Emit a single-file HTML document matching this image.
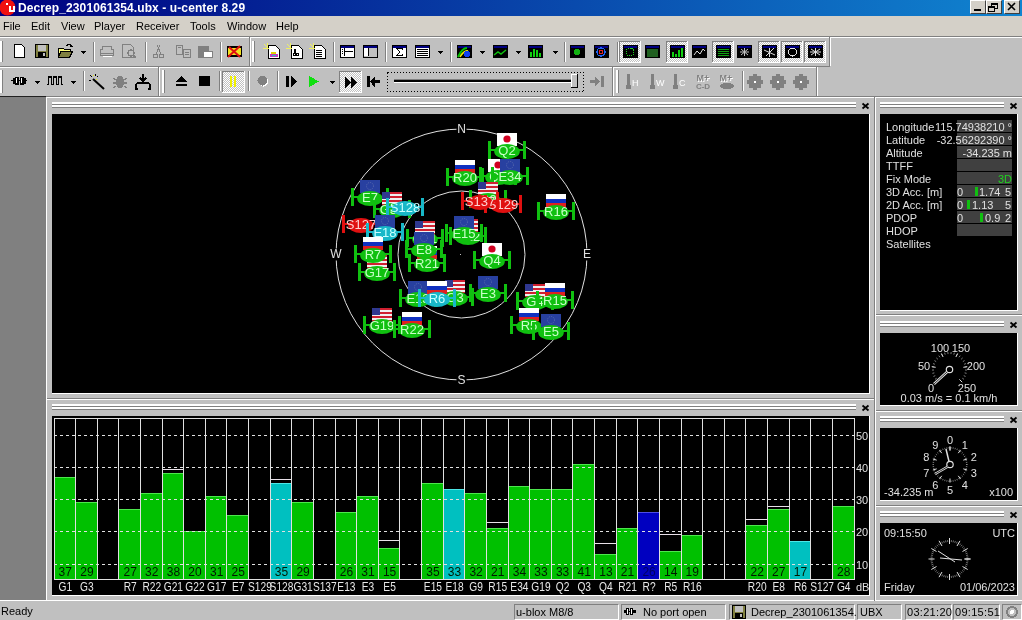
<!DOCTYPE html><html><head><meta charset="utf-8"><style>
html,body{margin:0;padding:0;width:1022px;height:620px;overflow:hidden;background:#c0c0c0;position:relative;font-family:"Liberation Sans",sans-serif}
body>div,body>svg{position:absolute}
.t{white-space:nowrap}
body{will-change:transform}
</style></head><body>
<div style="left:0;top:0;width:1022px;height:16px;background:linear-gradient(to right,#000080,#1084d0)"></div>
<svg style="left:0;top:0" width="17" height="16" shape-rendering="crispEdges"><circle cx="7.5" cy="7.5" r="8" fill="#f01010" shape-rendering="auto"/><rect x="6" y="3" width="2" height="2" fill="#fff"/><rect x="9" y="6" width="2" height="6" fill="#fff"/><rect x="13" y="6" width="2" height="6" fill="#fff"/><rect x="9" y="10" width="6" height="2" fill="#fff"/></svg>
<div class="t" style="left:18px;top:1px;color:#fff;font-weight:bold;font-size:12px;line-height:14px;letter-spacing:0.1px">Decrep_2301061354.ubx - u-center 8.29</div>
<div style="left:970px;top:0px;width:16px;height:14px;background:#d4d0c8;border-top:1px solid #fff;border-left:1px solid #fff;border-right:1px solid #404040;border-bottom:1px solid #404040;box-sizing:border-box"></div>
<div style="left:986px;top:0px;width:16px;height:14px;background:#d4d0c8;border-top:1px solid #fff;border-left:1px solid #fff;border-right:1px solid #404040;border-bottom:1px solid #404040;box-sizing:border-box"></div>
<div style="left:1004px;top:0px;width:16px;height:14px;background:#d4d0c8;border-top:1px solid #fff;border-left:1px solid #fff;border-right:1px solid #404040;border-bottom:1px solid #404040;box-sizing:border-box"></div>
<svg style="left:970px;top:0" width="52" height="14" shape-rendering="crispEdges"><rect x="4" y="9" width="7" height="2" fill="#000"/><path d="M21.5 3.5h6v5h-6z" fill="none" stroke="#000"/><rect x="21" y="3" width="7" height="2" fill="#000"/><path d="M18.5 6.5h6v5h-6z" fill="#d4d0c8" stroke="#000"/><rect x="18" y="6" width="7" height="2" fill="#000"/><path d="M38 3L45 10M45 3L38 10" stroke="#000" stroke-width="1.6" shape-rendering="auto"/></svg>
<div style="left:0px;top:16px;width:1022px;height:20px;background:#d4d0c8;"></div>
<div class="t" style="left:3px;top:20px;color:#000;font-size:11px;line-height:13px">File</div>
<div class="t" style="left:31px;top:20px;color:#000;font-size:11px;line-height:13px">Edit</div>
<div class="t" style="left:61px;top:20px;color:#000;font-size:11px;line-height:13px">View</div>
<div class="t" style="left:94px;top:20px;color:#000;font-size:11px;line-height:13px">Player</div>
<div class="t" style="left:136px;top:20px;color:#000;font-size:11px;line-height:13px">Receiver</div>
<div class="t" style="left:190px;top:20px;color:#000;font-size:11px;line-height:13px">Tools</div>
<div class="t" style="left:227px;top:20px;color:#000;font-size:11px;line-height:13px">Window</div>
<div class="t" style="left:276px;top:20px;color:#000;font-size:11px;line-height:13px">Help</div>
<div style="left:0px;top:36px;width:1022px;height:1px;background:#808080;"></div>
<div style="left:0px;top:37px;width:1022px;height:1px;background:#ffffff;"></div>
<div style="left:0px;top:38px;width:1022px;height:58px;background:#c0c0c0;"></div>
<div style="left:0px;top:66px;width:830px;height:1px;background:#808080;"></div>
<div style="left:0px;top:67px;width:817px;height:1px;background:#ffffff;"></div>
<div style="left:0px;top:96px;width:1022px;height:1px;background:#808080;"></div>
<div style="left:249px;top:37px;width:1px;height:29px;background:#808080;"></div>
<div style="left:250px;top:37px;width:1px;height:29px;background:#ffffff;"></div>
<div style="left:829px;top:37px;width:1px;height:29px;background:#808080;"></div>
<div style="left:830px;top:37px;width:1px;height:29px;background:#ffffff;"></div>
<div style="left:158px;top:67px;width:1px;height:29px;background:#808080;"></div>
<div style="left:159px;top:67px;width:1px;height:29px;background:#ffffff;"></div>
<div style="left:612px;top:67px;width:1px;height:29px;background:#808080;"></div>
<div style="left:613px;top:67px;width:1px;height:29px;background:#ffffff;"></div>
<div style="left:816px;top:67px;width:1px;height:29px;background:#808080;"></div>
<div style="left:817px;top:67px;width:1px;height:29px;background:#ffffff;"></div>
<div style="left:0px;top:41px;width:2px;height:21px;background:#ffffff;"></div>
<div style="left:2px;top:41px;width:1px;height:21px;background:#808080;"></div>
<div style="left:252px;top:41px;width:2px;height:21px;background:#ffffff;"></div>
<div style="left:254px;top:41px;width:1px;height:21px;background:#808080;"></div>
<div style="left:0px;top:70px;width:2px;height:23px;background:#ffffff;"></div>
<div style="left:2px;top:70px;width:1px;height:23px;background:#808080;"></div>
<div style="left:162px;top:70px;width:2px;height:23px;background:#ffffff;"></div>
<div style="left:164px;top:70px;width:1px;height:23px;background:#808080;"></div>
<div style="left:616px;top:70px;width:2px;height:23px;background:#ffffff;"></div>
<div style="left:618px;top:70px;width:1px;height:23px;background:#808080;"></div>
<div style="left:93px;top:42px;width:1px;height:20px;background:#808080;"></div>
<div style="left:94px;top:42px;width:1px;height:20px;background:#ffffff;"></div>
<div style="left:145px;top:42px;width:1px;height:20px;background:#808080;"></div>
<div style="left:146px;top:42px;width:1px;height:20px;background:#ffffff;"></div>
<div style="left:220px;top:42px;width:1px;height:20px;background:#808080;"></div>
<div style="left:221px;top:42px;width:1px;height:20px;background:#ffffff;"></div>
<div style="left:333px;top:42px;width:1px;height:20px;background:#808080;"></div>
<div style="left:334px;top:42px;width:1px;height:20px;background:#ffffff;"></div>
<div style="left:385px;top:42px;width:1px;height:20px;background:#808080;"></div>
<div style="left:386px;top:42px;width:1px;height:20px;background:#ffffff;"></div>
<div style="left:450px;top:42px;width:1px;height:20px;background:#808080;"></div>
<div style="left:451px;top:42px;width:1px;height:20px;background:#ffffff;"></div>
<div style="left:564px;top:42px;width:1px;height:20px;background:#808080;"></div>
<div style="left:565px;top:42px;width:1px;height:20px;background:#ffffff;"></div>
<div style="left:617px;top:42px;width:1px;height:20px;background:#808080;"></div>
<div style="left:618px;top:42px;width:1px;height:20px;background:#ffffff;"></div>
<div style="left:83px;top:71px;width:1px;height:20px;background:#808080;"></div>
<div style="left:84px;top:71px;width:1px;height:20px;background:#ffffff;"></div>
<div style="left:219px;top:71px;width:1px;height:20px;background:#808080;"></div>
<div style="left:220px;top:71px;width:1px;height:20px;background:#ffffff;"></div>
<div style="left:248px;top:71px;width:1px;height:20px;background:#808080;"></div>
<div style="left:249px;top:71px;width:1px;height:20px;background:#ffffff;"></div>
<div style="left:277px;top:71px;width:1px;height:20px;background:#808080;"></div>
<div style="left:278px;top:71px;width:1px;height:20px;background:#ffffff;"></div>
<div style="left:742px;top:71px;width:1px;height:20px;background:#808080;"></div>
<div style="left:743px;top:71px;width:1px;height:20px;background:#ffffff;"></div>
<svg style="left:0;top:0" width="1022" height="97" shape-rendering="crispEdges">
<defs><pattern id="dith" width="2" height="2" patternUnits="userSpaceOnUse"><rect width="2" height="2" fill="#c0c0c0"/><rect width="1" height="1" fill="#fff"/><rect x="1" y="1" width="1" height="1" fill="#fff"/></pattern></defs>
<path d="M14.5 44.5h7l3 3v9.5h-10z" fill="#fff" stroke="#000" stroke-width="1" />
<rect x="35" y="44" width="14" height="14" fill="#000"/>
<rect x="36" y="45" width="12" height="12" fill="#808040"/>
<rect x="38" y="45" width="8" height="6" fill="#c0c0c0"/>
<rect x="38" y="52" width="8" height="5" fill="#000"/>
<rect x="43" y="53" width="2" height="3" fill="#c0c0c0"/>
<path d="M58.5 48.5h5l1 1h6v2h-10l-2 6z" fill="#ffff80" stroke="#000" stroke-width="1" />
<path d="M58.5 56.5l3-5h11l-3 6h-11z" fill="#808040" stroke="#000" stroke-width="1" />
<path d="M66 46q3-3 6 0" fill="none" stroke="#000" stroke-width="1.2" />
<path d="M71 45l2 2h-3z" fill="#000" stroke="none" stroke-width="1" />
<path d="M81 51h5l-2.5 3z" fill="#000" stroke="none" stroke-width="1" />
<path d="M102.5 46.5h9v3h2v6h-13v-6h2z" fill="none" stroke="#808080" stroke-width="1" />
<rect x="101" y="53" width="12" height="1" fill="#808080"/>
<rect x="103" y="56" width="9" height="1" fill="#fff"/>
<path d="M122.5 44.5h8l3 3v10h-11z" fill="none" stroke="#808080" stroke-width="1" />
<circle cx="131" cy="53" r="3" fill="none" stroke="#808080" stroke-width="1.2"/>
<path d="M133 55l3 3" fill="none" stroke="#808080" stroke-width="1.5" />
<circle cx="155.5" cy="56" r="2" fill="none" stroke="#808080"/>
<circle cx="161.5" cy="56" r="2" fill="none" stroke="#808080"/>
<path d="M156 54l4-9M161 54l-4-9" fill="none" stroke="#808080" stroke-width="1" />
<path d="M176.5 45.5h6v9h-6zM183.5 49.5h7v8h-7z" fill="#c0c0c0" stroke="#808080" stroke-width="1" />
<rect x="178" y="47" width="3" height="1" fill="#808080"/>
<rect x="185" y="52" width="4" height="1" fill="#808080"/>
<rect x="185" y="54" width="4" height="1" fill="#808080"/>
<rect x="198" y="46" width="11" height="12" fill="#808080"/>
<rect x="203" y="51" width="10" height="7" fill="#fff"/>
<path d="M203.5 51.5h9v6h-9z" fill="none" stroke="#808080" stroke-width="1" />
<rect x="227" y="46" width="15" height="11" fill="#000"/>
<rect x="228" y="48" width="13" height="7" fill="#f0e020"/>
<path d="M228 57l12-11M229 47l11 10" fill="none" stroke="#e01010" stroke-width="2" shape-rendering="auto"/>
<path d="M268.5 45.5h7l4 4v8.5h-11z" fill="#fff" stroke="#000" stroke-width="1" />
<path d="M264 44l5 5M263 48h5M267 43v5" fill="none" stroke="#f0f060" stroke-width="1" />
<path d="M291.5 45.5h7l4 4v8.5h-11z" fill="#fff" stroke="#000" stroke-width="1" />
<path d="M287 44l5 5M286 48h5M290 43v5" fill="none" stroke="#f0f060" stroke-width="1" />
<path d="M314.5 45.5h7l4 4v8.5h-11z" fill="#fff" stroke="#000" stroke-width="1" />
<path d="M310 44l5 5M309 48h5M313 43v5" fill="none" stroke="#f0f060" stroke-width="1" />
<rect x="271" y="52" width="5" height="2" fill="#e0d000"/>
<rect x="270" y="54" width="8" height="3" fill="#c040c0"/>
<rect x="272" y="55" width="4" height="1" fill="#20c0c0"/>
<rect x="294" y="49" width="2" height="4" fill="#000"/>
<rect x="293" y="53" width="6" height="3" fill="#000"/>
<rect x="294" y="54" width="1" height="1" fill="#fff"/>
<rect x="297" y="54" width="1" height="1" fill="#fff"/>
<rect x="316" y="50" width="6" height="1" fill="#000"/>
<rect x="316" y="52" width="6" height="1" fill="#000"/>
<rect x="316" y="54" width="6" height="1" fill="#000"/>
<rect x="316" y="56" width="6" height="1" fill="#000"/>
<rect x="340" y="45" width="15" height="13" fill="#000"/>
<rect x="341" y="46" width="13" height="2" fill="#000080"/>
<rect x="341" y="48" width="13" height="9" fill="#fff"/>
<rect x="344" y="48" width="1" height="8" fill="#000"/>
<rect x="345" y="51" width="8" height="1" fill="#000"/>
<rect x="342" y="49" width="1" height="1" fill="#000"/>
<rect x="342" y="51" width="1" height="1" fill="#000"/>
<rect x="342" y="53" width="1" height="1" fill="#000"/>
<rect x="363" y="45" width="15" height="13" fill="#000"/>
<rect x="364" y="46" width="13" height="2" fill="#000080"/>
<rect x="364" y="48" width="13" height="9" fill="#c0c0c0"/>
<rect x="364" y="48" width="4" height="8" fill="#fff"/>
<rect x="368" y="48" width="1" height="8" fill="#000"/>
<rect x="392" y="45" width="15" height="13" fill="#000"/>
<rect x="393" y="46" width="13" height="2" fill="#000080"/>
<rect x="393" y="48" width="13" height="9" fill="#fff"/>
<path d="M396 48h7v2h-1l-1-1h-3l2 3l-2 3h3l1-1h1v2h-7l3-4z" fill="#000" stroke="none" stroke-width="1" />
<rect x="415" y="45" width="15" height="13" fill="#000"/>
<rect x="416" y="46" width="13" height="2" fill="#000080"/>
<rect x="416" y="48" width="13" height="9" fill="#fff"/>
<rect x="417" y="49" width="11" height="1" fill="#000"/>
<rect x="417" y="51" width="11" height="1" fill="#000"/>
<rect x="417" y="53" width="11" height="1" fill="#000"/>
<rect x="417" y="55" width="11" height="1" fill="#000"/>
<path d="M438 51h5l-2.5 3z" fill="#000" stroke="none" stroke-width="1" />
<rect x="457" y="45" width="15" height="13" fill="#000"/>
<rect x="458" y="46" width="13" height="2" fill="#000080"/>
<rect x="458" y="48" width="13" height="9" fill="#000"/>
<path d="M458 57q4-9 9-9" fill="none" stroke="#00c000" stroke-width="2" shape-rendering="auto"/>
<path d="M460 57q4-7 8-6" fill="none" stroke="#f0f000" stroke-width="1.5" shape-rendering="auto"/>
<circle cx="467" cy="54" r="3" fill="#1040f0"/>
<path d="M480 51h5l-2.5 3z" fill="#000" stroke="none" stroke-width="1" />
<rect x="493" y="45" width="15" height="13" fill="#000"/>
<rect x="494" y="46" width="13" height="2" fill="#000080"/>
<rect x="494" y="48" width="13" height="9" fill="#000"/>
<path d="M494 55l4-3l3 2l5-4" fill="none" stroke="#10c010" stroke-width="1.5" shape-rendering="auto"/>
<path d="M516 51h5l-2.5 3z" fill="#000" stroke="none" stroke-width="1" />
<rect x="528" y="45" width="15" height="13" fill="#000"/>
<rect x="529" y="46" width="13" height="2" fill="#000080"/>
<rect x="529" y="48" width="13" height="9" fill="#000"/>
<rect x="530" y="52" width="2" height="5" fill="#10d010"/>
<rect x="533" y="49" width="2" height="8" fill="#10d010"/>
<rect x="536" y="50" width="2" height="7" fill="#10d010"/>
<rect x="539" y="53" width="2" height="4" fill="#10d010"/>
<path d="M553 51h5l-2.5 3z" fill="#000" stroke="none" stroke-width="1" />
<rect x="570" y="45" width="15" height="13" fill="#000"/>
<rect x="571" y="46" width="13" height="2" fill="#000080"/>
<rect x="571" y="48" width="13" height="9" fill="#000"/>
<circle cx="577" cy="52" r="3" fill="#10b010"/>
<rect x="594" y="45" width="15" height="13" fill="#000"/>
<rect x="595" y="46" width="13" height="2" fill="#000080"/>
<rect x="595" y="48" width="13" height="9" fill="#000"/>
<circle cx="601" cy="52" r="4" fill="none" stroke="#2060f0" stroke-width="1.3"/><circle cx="601" cy="52" r="2" fill="none" stroke="#e02020"/>
<rect x="619" y="41" width="22" height="22" fill="url(#dith)"/>
<rect x="619" y="41" width="22" height="1" fill="#808080"/>
<rect x="619" y="41" width="1" height="22" fill="#808080"/>
<rect x="619" y="62" width="22" height="1" fill="#fff"/>
<rect x="640" y="41" width="1" height="22" fill="#fff"/>
<rect x="666" y="41" width="22" height="22" fill="url(#dith)"/>
<rect x="666" y="41" width="22" height="1" fill="#808080"/>
<rect x="666" y="41" width="1" height="22" fill="#808080"/>
<rect x="666" y="62" width="22" height="1" fill="#fff"/>
<rect x="687" y="41" width="1" height="22" fill="#fff"/>
<rect x="712" y="41" width="22" height="22" fill="url(#dith)"/>
<rect x="712" y="41" width="22" height="1" fill="#808080"/>
<rect x="712" y="41" width="1" height="22" fill="#808080"/>
<rect x="712" y="62" width="22" height="1" fill="#fff"/>
<rect x="733" y="41" width="1" height="22" fill="#fff"/>
<rect x="758" y="41" width="22" height="22" fill="url(#dith)"/>
<rect x="758" y="41" width="22" height="1" fill="#808080"/>
<rect x="758" y="41" width="1" height="22" fill="#808080"/>
<rect x="758" y="62" width="22" height="1" fill="#fff"/>
<rect x="779" y="41" width="1" height="22" fill="#fff"/>
<rect x="781" y="41" width="22" height="22" fill="url(#dith)"/>
<rect x="781" y="41" width="22" height="1" fill="#808080"/>
<rect x="781" y="41" width="1" height="22" fill="#808080"/>
<rect x="781" y="62" width="22" height="1" fill="#fff"/>
<rect x="802" y="41" width="1" height="22" fill="#fff"/>
<rect x="804" y="41" width="22" height="22" fill="url(#dith)"/>
<rect x="804" y="41" width="22" height="1" fill="#808080"/>
<rect x="804" y="41" width="1" height="22" fill="#808080"/>
<rect x="804" y="62" width="22" height="1" fill="#fff"/>
<rect x="825" y="41" width="1" height="22" fill="#fff"/>
<rect x="623" y="45" width="15" height="13" fill="#000"/>
<rect x="624" y="46" width="13" height="2" fill="#000080"/>
<rect x="624" y="48" width="13" height="9" fill="#000"/>
<circle cx="630" cy="52" r="4" fill="none" stroke="#20d020" stroke-width="1" stroke-dasharray="1 1"/>
<rect x="645" y="45" width="15" height="13" fill="#000"/>
<rect x="646" y="46" width="13" height="2" fill="#000080"/>
<rect x="646" y="48" width="13" height="9" fill="#000"/>
<rect x="647" y="49" width="11" height="8" fill="#206020"/>
<rect x="670" y="45" width="15" height="13" fill="#000"/>
<rect x="671" y="46" width="13" height="2" fill="#000080"/>
<rect x="671" y="48" width="13" height="9" fill="#000"/>
<rect x="672" y="52" width="2" height="5" fill="#10d010"/>
<rect x="675" y="54" width="2" height="3" fill="#10d010"/>
<rect x="678" y="50" width="2" height="7" fill="#10d010"/>
<rect x="681" y="48" width="2" height="9" fill="#10d010"/>
<rect x="692" y="45" width="15" height="13" fill="#000"/>
<rect x="693" y="46" width="13" height="2" fill="#000080"/>
<rect x="693" y="48" width="13" height="9" fill="#000"/>
<path d="M694 55l3-4l3 3l3-5l2 2" fill="none" stroke="#e0e0e0" stroke-width="1" shape-rendering="auto"/>
<rect x="716" y="45" width="15" height="13" fill="#000"/>
<rect x="717" y="46" width="13" height="2" fill="#000080"/>
<rect x="717" y="48" width="13" height="9" fill="#000"/>
<rect x="718" y="49" width="11" height="1" fill="#10a010"/>
<rect x="718" y="51" width="11" height="1" fill="#10a010"/>
<rect x="718" y="53" width="11" height="1" fill="#10a010"/>
<rect x="718" y="55" width="11" height="1" fill="#10a010"/>
<rect x="737" y="45" width="15" height="13" fill="#000"/>
<rect x="738" y="46" width="13" height="2" fill="#000080"/>
<rect x="738" y="48" width="13" height="9" fill="#000"/>
<path d="M740 52h9M744.5 48v8M741 49l7 6M748 49l-7 6" fill="none" stroke="#c0c0c0" stroke-width="1" shape-rendering="auto"/>
<rect x="762" y="45" width="15" height="13" fill="#000"/>
<rect x="763" y="46" width="13" height="2" fill="#000080"/>
<rect x="763" y="48" width="13" height="9" fill="#000"/>
<path d="M764 50l11 5M769.5 48v9M766 56l8-8" fill="none" stroke="#e0e0e0" stroke-width="1" shape-rendering="auto"/>
<rect x="785" y="45" width="15" height="13" fill="#000"/>
<rect x="786" y="46" width="13" height="2" fill="#000080"/>
<rect x="786" y="48" width="13" height="9" fill="#000"/>
<circle cx="792.5" cy="52" r="4" fill="none" stroke="#e0e0e0" stroke-width="1"/>
<rect x="808" y="45" width="15" height="13" fill="#000"/>
<rect x="809" y="46" width="13" height="2" fill="#000080"/>
<rect x="809" y="48" width="13" height="9" fill="#000"/>
<path d="M810 52h11M815.5 48v8M811 49l9 6M820 49l-9 6" fill="none" stroke="#e0e0e0" stroke-width="1" shape-rendering="auto"/>
<path d="M11 80h2M13 78h2v5h-2zM15 77h3v7h-3zM20 77h3v7h-3zM23 78h2v5h-2zM25 80h2" fill="#000" stroke="#000" stroke-width="1" />
<rect x="11" y="80" width="16" height="1" fill="#000"/>
<rect x="16" y="78" width="1" height="5" fill="#fff"/>
<rect x="21" y="78" width="1" height="5" fill="#fff"/>
<path d="M35 81h5l-2.5 3z" fill="#000" stroke="none" stroke-width="1" />
<path d="M47 84.5h1.5v-7.5h3v7.5h2v-7.5h3v7.5h2v-7.5h3v7.5h1" fill="none" stroke="#000" stroke-width="1.3" />
<path d="M71 81h5l-2.5 3z" fill="#000" stroke="none" stroke-width="1" />
<path d="M93 79l11 10" fill="none" stroke="#000" stroke-width="2" shape-rendering="auto"/>
<path d="M90 75l2 2M95 74v2M89 80h2M97 77l1-1" fill="none" stroke="#000" stroke-width="1" />
<rect x="93" y="75" width="1" height="1" fill="#f0f000"/>
<rect x="96" y="79" width="1" height="1" fill="#f0f000"/>
<ellipse cx="120" cy="82" rx="4" ry="6" fill="#808080"/>
<path d="M113 78l3 2M127 78l-3 2M113 83h3M124 83h3M113 88l3-2M127 88l-3-2" fill="none" stroke="#808080" stroke-width="1.2" />
<path d="M143 74v6M140 78l3 3l3-3" fill="none" stroke="#000" stroke-width="1.5" />
<path d="M136 89v-3q0-3 3-3h8q3 0 3 3v3" fill="none" stroke="#000" stroke-width="1.6" />
<rect x="135" y="88" width="3" height="2" fill="#000"/>
<rect x="148" y="88" width="3" height="2" fill="#000"/>
<path d="M181.5 76l5.5 6h-11z" fill="#000" stroke="none" stroke-width="1" />
<rect x="176" y="84" width="11" height="2" fill="#000"/>
<rect x="199" y="76" width="11" height="10" fill="#000"/>
<rect x="222" y="71" width="23" height="22" fill="url(#dith)"/>
<rect x="222" y="71" width="23" height="1" fill="#808080"/>
<rect x="222" y="71" width="1" height="22" fill="#808080"/>
<rect x="222" y="92" width="23" height="1" fill="#fff"/>
<rect x="244" y="71" width="1" height="22" fill="#fff"/>
<rect x="230" y="76" width="2" height="11" fill="#f0f000"/>
<rect x="234" y="76" width="2" height="11" fill="#f0f000"/>
<circle cx="263.5" cy="81.5" r="5" fill="#fff"/><circle cx="262.5" cy="80.5" r="5" fill="#808080"/>
<rect x="286" y="76" width="3" height="11" fill="#000"/>
<path d="M291 76l6 5.5l-6 5.5z" fill="#000" stroke="none" stroke-width="1" />
<path d="M309 76l10 5.5l-10 5.5z" fill="#10e010" stroke="none" stroke-width="1" />
<path d="M330 81h5l-2.5 3z" fill="#000" stroke="none" stroke-width="1" />
<rect x="339" y="71" width="23" height="22" fill="url(#dith)"/>
<rect x="339" y="71" width="23" height="1" fill="#808080"/>
<rect x="339" y="71" width="1" height="22" fill="#808080"/>
<rect x="339" y="92" width="23" height="1" fill="#fff"/>
<rect x="361" y="71" width="1" height="22" fill="#fff"/>
<path d="M345 77l6 5.5l-6 5.5zM351 77l6 5.5l-6 5.5z" fill="#000" stroke="none" stroke-width="1" />
<rect x="367" y="76" width="3" height="11" fill="#000"/>
<path d="M370 81.5l5-5v11z" fill="#000" stroke="none" stroke-width="1" />
<rect x="373" y="80" width="7" height="3" fill="#000"/>
<rect x="387.5" y="72.5" width="196" height="19" fill="none" stroke="#000" stroke-width="1" stroke-dasharray="1 2"/>
<rect x="394" y="80" width="177" height="2" fill="#000"/>
<rect x="394" y="82" width="177" height="1" fill="#fff"/>
<rect x="394" y="79" width="177" height="1" fill="#808080"/>
<rect x="571" y="74" width="7" height="14" fill="#c0c0c0"/>
<rect x="571" y="74" width="7" height="1" fill="#fff"/>
<rect x="571" y="74" width="1" height="14" fill="#fff"/>
<rect x="577" y="74" width="1" height="14" fill="#000"/>
<rect x="571" y="87" width="7" height="1" fill="#000"/>
<path d="M590 80h7v3h-7zM595 76l5 5.5l-5 5.5z" fill="#808080" stroke="none" stroke-width="1" />
<rect x="601" y="76" width="3" height="11" fill="#808080"/>
<rect x="627" y="74" width="3" height="12" fill="#808080"/>
<circle cx="628.5" cy="87" r="2.5" fill="#808080"/>
<text x="632" y="86" font-size="9" fill="#fff" font-family="Liberation Sans" shape-rendering="auto">H</text>
<rect x="651" y="74" width="3" height="12" fill="#808080"/>
<circle cx="652.5" cy="87" r="2.5" fill="#808080"/>
<text x="656" y="86" font-size="9" fill="#fff" font-family="Liberation Sans" shape-rendering="auto">W</text>
<rect x="674" y="74" width="3" height="12" fill="#808080"/>
<circle cx="675.5" cy="87" r="2.5" fill="#808080"/>
<text x="679" y="86" font-size="9" fill="#fff" font-family="Liberation Sans" shape-rendering="auto">C</text>
<text x="704" y="82" font-size="9" font-weight="bold" fill="#fff" text-anchor="middle" font-family="Liberation Sans">M+</text>
<text x="703" y="81" font-size="9" font-weight="bold" fill="#808080" text-anchor="middle" font-family="Liberation Sans">M+</text>
<text x="727" y="82" font-size="9" font-weight="bold" fill="#fff" text-anchor="middle" font-family="Liberation Sans">M+</text>
<text x="726" y="81" font-size="9" font-weight="bold" fill="#808080" text-anchor="middle" font-family="Liberation Sans">M+</text>
<text x="703" y="89" font-size="8" font-weight="bold" fill="#808080" text-anchor="middle" font-family="Liberation Sans">C-D</text>
<ellipse cx="727" cy="86" rx="7" ry="3" fill="#808080"/>
<circle cx="755" cy="82" r="5" fill="#808080"/>
<rect x="759.0" y="80.0" width="4" height="4" fill="#808080"/>
<rect x="757.2" y="84.2" width="4" height="4" fill="#808080"/>
<rect x="753.0" y="86.0" width="4" height="4" fill="#808080"/>
<rect x="748.8" y="84.2" width="4" height="4" fill="#808080"/>
<rect x="747.0" y="80.0" width="4" height="4" fill="#808080"/>
<rect x="748.8" y="75.8" width="4" height="4" fill="#808080"/>
<rect x="753.0" y="74.0" width="4" height="4" fill="#808080"/>
<rect x="757.2" y="75.8" width="4" height="4" fill="#808080"/>
<circle cx="755" cy="82" r="1.5" fill="#fff"/>
<circle cx="778" cy="82" r="5" fill="#808080"/>
<rect x="782.0" y="80.0" width="4" height="4" fill="#808080"/>
<rect x="780.2" y="84.2" width="4" height="4" fill="#808080"/>
<rect x="776.0" y="86.0" width="4" height="4" fill="#808080"/>
<rect x="771.8" y="84.2" width="4" height="4" fill="#808080"/>
<rect x="770.0" y="80.0" width="4" height="4" fill="#808080"/>
<rect x="771.8" y="75.8" width="4" height="4" fill="#808080"/>
<rect x="776.0" y="74.0" width="4" height="4" fill="#808080"/>
<rect x="780.2" y="75.8" width="4" height="4" fill="#808080"/>
<circle cx="778" cy="82" r="1.5" fill="#fff"/>
<circle cx="801" cy="82" r="5" fill="#808080"/>
<rect x="805.0" y="80.0" width="4" height="4" fill="#808080"/>
<rect x="803.2" y="84.2" width="4" height="4" fill="#808080"/>
<rect x="799.0" y="86.0" width="4" height="4" fill="#808080"/>
<rect x="794.8" y="84.2" width="4" height="4" fill="#808080"/>
<rect x="793.0" y="80.0" width="4" height="4" fill="#808080"/>
<rect x="794.8" y="75.8" width="4" height="4" fill="#808080"/>
<rect x="799.0" y="74.0" width="4" height="4" fill="#808080"/>
<rect x="803.2" y="75.8" width="4" height="4" fill="#808080"/>
<circle cx="801" cy="82" r="1.5" fill="#fff"/>
</svg>
<div style="left:0px;top:97px;width:46px;height:504px;background:#808080;"></div>
<div style="left:0px;top:96px;width:46px;height:1px;background:#202020;"></div>
<div style="left:46px;top:97px;width:1px;height:504px;background:#ffffff;"></div>
<div style="left:47px;top:97px;width:975px;height:504px;background:#c0c0c0;"></div>
<div style="left:47px;top:97px;width:975px;height:1px;background:#ffffff;"></div>
<div style="left:0px;top:600px;width:1022px;height:1px;background:#ffffff;"></div>
<div style="left:52px;top:102px;width:804px;height:2px;background:#fff"></div>
<div style="left:52px;top:104px;width:804px;height:1px;background:#808080"></div>
<div style="left:52px;top:105px;width:804px;height:2px;background:#fff"></div>
<div style="left:52px;top:107px;width:804px;height:1px;background:#808080"></div>
<svg style="left:861px;top:102px" width="9" height="8"><path d="M1.5 1.5L7.5 6.5M7.5 1.5L1.5 6.5" stroke="#000" stroke-width="1.8"/></svg>
<div style="left:52px;top:114px;width:817px;height:279px;background:#000;"></div>
<div style="left:52px;top:393px;width:818px;height:1px;background:#ffffff;"></div>
<div style="left:869px;top:114px;width:1px;height:280px;background:#ffffff;"></div>
<div style="left:47px;top:398px;width:827px;height:1px;background:#808080;"></div>
<div style="left:47px;top:399px;width:827px;height:1px;background:#ffffff;"></div>
<div style="left:52px;top:404px;width:804px;height:2px;background:#fff"></div>
<div style="left:52px;top:406px;width:804px;height:1px;background:#808080"></div>
<div style="left:52px;top:407px;width:804px;height:2px;background:#fff"></div>
<div style="left:52px;top:409px;width:804px;height:1px;background:#808080"></div>
<svg style="left:861px;top:404px" width="9" height="8"><path d="M1.5 1.5L7.5 6.5M7.5 1.5L1.5 6.5" stroke="#000" stroke-width="1.8"/></svg>
<div style="left:52px;top:416px;width:817px;height:179px;background:#000;"></div>
<div style="left:52px;top:595px;width:818px;height:1px;background:#ffffff;"></div>
<div style="left:869px;top:416px;width:1px;height:180px;background:#ffffff;"></div>
<div style="left:874px;top:97px;width:1px;height:504px;background:#808080;"></div>
<div style="left:875px;top:97px;width:1px;height:504px;background:#ffffff;"></div>
<div style="left:880px;top:102px;width:124px;height:2px;background:#fff"></div>
<div style="left:880px;top:104px;width:124px;height:1px;background:#808080"></div>
<div style="left:880px;top:105px;width:124px;height:2px;background:#fff"></div>
<div style="left:880px;top:107px;width:124px;height:1px;background:#808080"></div>
<svg style="left:1009px;top:102px" width="9" height="8"><path d="M1.5 1.5L7.5 6.5M7.5 1.5L1.5 6.5" stroke="#000" stroke-width="1.8"/></svg>
<div style="left:880px;top:114px;width:137px;height:196px;background:#000;"></div>
<div style="left:880px;top:310px;width:138px;height:1px;background:#ffffff;"></div>
<div style="left:1017px;top:114px;width:1px;height:197px;background:#ffffff;"></div>
<div style="left:880px;top:321px;width:124px;height:2px;background:#fff"></div>
<div style="left:880px;top:323px;width:124px;height:1px;background:#808080"></div>
<div style="left:880px;top:324px;width:124px;height:2px;background:#fff"></div>
<div style="left:880px;top:326px;width:124px;height:1px;background:#808080"></div>
<svg style="left:1009px;top:321px" width="9" height="8"><path d="M1.5 1.5L7.5 6.5M7.5 1.5L1.5 6.5" stroke="#000" stroke-width="1.8"/></svg>
<div style="left:880px;top:333px;width:137px;height:72px;background:#000;"></div>
<div style="left:880px;top:405px;width:138px;height:1px;background:#ffffff;"></div>
<div style="left:1017px;top:333px;width:1px;height:73px;background:#ffffff;"></div>
<div style="left:880px;top:416px;width:124px;height:2px;background:#fff"></div>
<div style="left:880px;top:418px;width:124px;height:1px;background:#808080"></div>
<div style="left:880px;top:419px;width:124px;height:2px;background:#fff"></div>
<div style="left:880px;top:421px;width:124px;height:1px;background:#808080"></div>
<svg style="left:1009px;top:416px" width="9" height="8"><path d="M1.5 1.5L7.5 6.5M7.5 1.5L1.5 6.5" stroke="#000" stroke-width="1.8"/></svg>
<div style="left:880px;top:428px;width:137px;height:72px;background:#000;"></div>
<div style="left:880px;top:500px;width:138px;height:1px;background:#ffffff;"></div>
<div style="left:1017px;top:428px;width:1px;height:73px;background:#ffffff;"></div>
<div style="left:880px;top:511px;width:124px;height:2px;background:#fff"></div>
<div style="left:880px;top:513px;width:124px;height:1px;background:#808080"></div>
<div style="left:880px;top:514px;width:124px;height:2px;background:#fff"></div>
<div style="left:880px;top:516px;width:124px;height:1px;background:#808080"></div>
<svg style="left:1009px;top:511px" width="9" height="8"><path d="M1.5 1.5L7.5 6.5M7.5 1.5L1.5 6.5" stroke="#000" stroke-width="1.8"/></svg>
<div style="left:880px;top:523px;width:137px;height:72px;background:#000;"></div>
<div style="left:880px;top:595px;width:138px;height:1px;background:#ffffff;"></div>
<div style="left:1017px;top:523px;width:1px;height:73px;background:#ffffff;"></div>
<div style="left:876px;top:314px;width:146px;height:1px;background:#808080;"></div>
<div style="left:876px;top:315px;width:146px;height:1px;background:#ffffff;"></div>
<div style="left:876px;top:410px;width:146px;height:1px;background:#808080;"></div>
<div style="left:876px;top:411px;width:146px;height:1px;background:#ffffff;"></div>
<div style="left:876px;top:505px;width:146px;height:1px;background:#808080;"></div>
<div style="left:876px;top:506px;width:146px;height:1px;background:#ffffff;"></div>
<div style="left:0px;top:601px;width:1022px;height:19px;background:#c0c0c0;"></div>
<div class="t" style="left:1px;top:605px;color:#000;font-size:11px;line-height:13px">Ready</div>
<div style="left:514px;top:604px;width:105px;height:16px;box-sizing:border-box;border-top:1px solid #808080;border-left:1px solid #808080;border-right:1px solid #fff;border-bottom:1px solid #fff"></div>
<div style="left:621px;top:604px;width:105px;height:16px;box-sizing:border-box;border-top:1px solid #808080;border-left:1px solid #808080;border-right:1px solid #fff;border-bottom:1px solid #fff"></div>
<div style="left:729px;top:604px;width:126px;height:16px;box-sizing:border-box;border-top:1px solid #808080;border-left:1px solid #808080;border-right:1px solid #fff;border-bottom:1px solid #fff"></div>
<div style="left:857px;top:604px;width:45px;height:16px;box-sizing:border-box;border-top:1px solid #808080;border-left:1px solid #808080;border-right:1px solid #fff;border-bottom:1px solid #fff"></div>
<div style="left:905px;top:604px;width:47px;height:16px;box-sizing:border-box;border-top:1px solid #808080;border-left:1px solid #808080;border-right:1px solid #fff;border-bottom:1px solid #fff"></div>
<div style="left:953px;top:604px;width:47px;height:16px;box-sizing:border-box;border-top:1px solid #808080;border-left:1px solid #808080;border-right:1px solid #fff;border-bottom:1px solid #fff"></div>
<div style="left:1002px;top:604px;width:20px;height:16px;box-sizing:border-box;border-top:1px solid #808080;border-left:1px solid #808080;border-right:1px solid #fff;border-bottom:1px solid #fff"></div>
<div class="t" style="left:516px;top:606px;color:#000;font-size:11px;line-height:13px">u-blox M8/8</div>
<div class="t" style="left:643px;top:606px;color:#000;font-size:11px;line-height:13px">No port open</div>
<div class="t" style="left:751px;top:606px;color:#000;font-size:11px;line-height:13px">Decrep_2301061354.</div>
<div class="t" style="left:860px;top:606px;color:#000;font-size:11px;line-height:13px">UBX</div>
<div class="t" style="left:907px;top:606px;color:#000;font-size:11px;line-height:13px;letter-spacing:0.3px">03:21:20</div>
<div class="t" style="left:955px;top:606px;color:#000;font-size:11px;line-height:13px;letter-spacing:0.3px">09:15:51</div>
<svg style="left:0;top:0" width="1022" height="620">
<defs><clipPath id="skyclip"><rect x="52" y="114" width="817" height="279"/></clipPath></defs>
<g clip-path="url(#skyclip)">
<circle cx="461.5" cy="254.5" r="125.5" fill="none" stroke="#e0e0e0" stroke-width="1"/>
<circle cx="461.5" cy="254.5" r="63.5" fill="none" stroke="#e0e0e0" stroke-width="1"/>
<rect x="460" y="254" width="1" height="1" fill="#c0c0c0"/>
<rect x="456.5" y="123.0" width="10" height="12" fill="#000"/>
<text x="461.5" y="132.8" font-size="12" fill="#e0e0e0" text-anchor="middle" font-family="Liberation Sans">N</text>
<rect x="456.5" y="374.0" width="10" height="12" fill="#000"/>
<text x="461.5" y="383.8" font-size="12" fill="#e0e0e0" text-anchor="middle" font-family="Liberation Sans">S</text>
<rect x="331.0" y="248.5" width="10" height="12" fill="#000"/>
<text x="336.0" y="258.3" font-size="12" fill="#e0e0e0" text-anchor="middle" font-family="Liberation Sans">W</text>
<rect x="582.0" y="248.5" width="10" height="12" fill="#000"/>
<text x="587.0" y="258.3" font-size="12" fill="#e0e0e0" text-anchor="middle" font-family="Liberation Sans">E</text>
<rect x="497" y="133" width="20" height="13" fill="#fff"/><circle cx="507" cy="139" r="3.6" fill="#d00020"/><ellipse cx="507" cy="151.5" rx="12.8" ry="7.5" fill="#10c010"/><rect x="488" y="141" width="3" height="18" fill="#10c010"/><rect x="523" y="141" width="3" height="18" fill="#10c010"/><rect x="490" y="149" width="34" height="2" fill="#10c010"/><text x="507" y="155" font-size="13" fill="#c8ffc8" text-anchor="middle" font-family="Liberation Sans">Q2</text>
<rect x="455" y="160" width="20" height="5" fill="#fff"/><rect x="455" y="165" width="20" height="4" fill="#1030c0"/><rect x="455" y="169" width="20" height="4" fill="#e02020"/><ellipse cx="465" cy="178.5" rx="12.8" ry="7.5" fill="#10c010"/><rect x="446" y="168" width="3" height="18" fill="#10c010"/><rect x="481" y="168" width="3" height="18" fill="#10c010"/><rect x="448" y="176" width="34" height="2" fill="#10c010"/><text x="465" y="182" font-size="13" fill="#c8ffc8" text-anchor="middle" font-family="Liberation Sans">R20</text>
<rect x="488" y="159" width="20" height="13" fill="#fff"/><circle cx="498" cy="165" r="3.6" fill="#d00020"/><ellipse cx="498" cy="177.5" rx="12.8" ry="7.5" fill="#10c010"/><rect x="479" y="167" width="3" height="18" fill="#10c010"/><rect x="514" y="167" width="3" height="18" fill="#10c010"/><rect x="481" y="175" width="34" height="2" fill="#10c010"/><text x="498" y="181" font-size="13" fill="#c8ffc8" text-anchor="middle" font-family="Liberation Sans">Q3</text>
<rect x="500" y="159" width="20" height="13" fill="#2840a0"/><circle cx="510" cy="165" r="3.5" fill="none" stroke="#6070b0" stroke-width="0.8" stroke-dasharray="1 1"/><ellipse cx="510" cy="177.5" rx="12.8" ry="7.5" fill="#10c010"/><rect x="491" y="167" width="3" height="18" fill="#10c010"/><rect x="526" y="167" width="3" height="18" fill="#10c010"/><rect x="493" y="175" width="34" height="2" fill="#10c010"/><text x="510" y="181" font-size="13" fill="#c8ffc8" text-anchor="middle" font-family="Liberation Sans">E34</text>
<rect x="478" y="182" width="20" height="2" fill="#d02030"/><rect x="478" y="184" width="20" height="2" fill="#f0f0f0"/><rect x="478" y="186" width="20" height="2" fill="#d02030"/><rect x="478" y="188" width="20" height="2" fill="#f0f0f0"/><rect x="478" y="190" width="20" height="2" fill="#d02030"/><rect x="478" y="192" width="20" height="2" fill="#f0f0f0"/><rect x="478" y="194" width="20" height="1" fill="#d02030"/><rect x="478" y="182" width="8" height="7" fill="#303890"/><ellipse cx="488" cy="200.5" rx="12.8" ry="7.5" fill="#10c010"/><rect x="469" y="190" width="3" height="18" fill="#10c010"/><rect x="504" y="190" width="3" height="18" fill="#10c010"/><rect x="471" y="198" width="34" height="2" fill="#10c010"/><text x="488" y="204" font-size="13" fill="#c8ffc8" text-anchor="middle" font-family="Liberation Sans">G9</text>
<ellipse cx="503" cy="205.5" rx="12.8" ry="7.5" fill="#e01010"/><rect x="484" y="195" width="3" height="18" fill="#e01010"/><rect x="519" y="195" width="3" height="18" fill="#e01010"/><rect x="486" y="203" width="34" height="2" fill="#e01010"/><text x="503" y="209" font-size="13" fill="#ffd0d0" text-anchor="middle" font-family="Liberation Sans">S129</text>
<ellipse cx="480" cy="202.5" rx="12.8" ry="7.5" fill="#e01010"/><rect x="461" y="192" width="3" height="18" fill="#e01010"/><rect x="496" y="192" width="3" height="18" fill="#e01010"/><rect x="463" y="200" width="34" height="2" fill="#e01010"/><text x="480" y="206" font-size="13" fill="#ffd0d0" text-anchor="middle" font-family="Liberation Sans">S137</text>
<rect x="546" y="194" width="20" height="5" fill="#fff"/><rect x="546" y="199" width="20" height="4" fill="#1030c0"/><rect x="546" y="203" width="20" height="4" fill="#e02020"/><ellipse cx="556" cy="212.5" rx="12.8" ry="7.5" fill="#10c010"/><rect x="537" y="202" width="3" height="18" fill="#10c010"/><rect x="572" y="202" width="3" height="18" fill="#10c010"/><rect x="539" y="210" width="34" height="2" fill="#10c010"/><text x="556" y="216" font-size="13" fill="#c8ffc8" text-anchor="middle" font-family="Liberation Sans">R16</text>
<rect x="360" y="180" width="20" height="13" fill="#2840a0"/><circle cx="370" cy="186" r="3.5" fill="none" stroke="#6070b0" stroke-width="0.8" stroke-dasharray="1 1"/><ellipse cx="370" cy="198.5" rx="12.8" ry="7.5" fill="#10c010"/><rect x="351" y="188" width="3" height="18" fill="#10c010"/><rect x="386" y="188" width="3" height="18" fill="#10c010"/><rect x="353" y="196" width="34" height="2" fill="#10c010"/><text x="370" y="202" font-size="13" fill="#c8ffc8" text-anchor="middle" font-family="Liberation Sans">E7</text>
<rect x="382" y="192" width="20" height="2" fill="#d02030"/><rect x="382" y="194" width="20" height="2" fill="#f0f0f0"/><rect x="382" y="196" width="20" height="2" fill="#d02030"/><rect x="382" y="198" width="20" height="2" fill="#f0f0f0"/><rect x="382" y="200" width="20" height="2" fill="#d02030"/><rect x="382" y="202" width="20" height="2" fill="#f0f0f0"/><rect x="382" y="204" width="20" height="1" fill="#d02030"/><rect x="382" y="192" width="8" height="7" fill="#303890"/><ellipse cx="392" cy="210.5" rx="12.8" ry="7.5" fill="#10c010"/><rect x="373" y="200" width="3" height="18" fill="#10c010"/><rect x="408" y="200" width="3" height="18" fill="#10c010"/><rect x="375" y="208" width="34" height="2" fill="#10c010"/><text x="392" y="214" font-size="13" fill="#c8ffc8" text-anchor="middle" font-family="Liberation Sans">G31</text>
<ellipse cx="405" cy="208.5" rx="12.8" ry="7.5" fill="#18b8c8"/><rect x="386" y="198" width="3" height="18" fill="#18b8c8"/><rect x="421" y="198" width="3" height="18" fill="#18b8c8"/><rect x="388" y="206" width="34" height="2" fill="#18b8c8"/><text x="405" y="212" font-size="13" fill="#c8ffff" text-anchor="middle" font-family="Liberation Sans">S128</text>
<ellipse cx="361" cy="225.5" rx="12.8" ry="7.5" fill="#e01010"/><rect x="342" y="215" width="3" height="18" fill="#e01010"/><rect x="377" y="215" width="3" height="18" fill="#e01010"/><rect x="344" y="223" width="34" height="2" fill="#e01010"/><text x="361" y="229" font-size="13" fill="#ffd0d0" text-anchor="middle" font-family="Liberation Sans">S127</text>
<rect x="375" y="215" width="20" height="13" fill="#2840a0"/><circle cx="385" cy="221" r="3.5" fill="none" stroke="#6070b0" stroke-width="0.8" stroke-dasharray="1 1"/><ellipse cx="385" cy="233.5" rx="12.8" ry="7.5" fill="#18b8c8"/><rect x="366" y="223" width="3" height="18" fill="#18b8c8"/><rect x="401" y="223" width="3" height="18" fill="#18b8c8"/><rect x="368" y="231" width="34" height="2" fill="#18b8c8"/><text x="385" y="237" font-size="13" fill="#c8ffff" text-anchor="middle" font-family="Liberation Sans">E18</text>
<rect x="415" y="221" width="20" height="2" fill="#d02030"/><rect x="415" y="223" width="20" height="2" fill="#f0f0f0"/><rect x="415" y="225" width="20" height="2" fill="#d02030"/><rect x="415" y="227" width="20" height="2" fill="#f0f0f0"/><rect x="415" y="229" width="20" height="2" fill="#d02030"/><rect x="415" y="231" width="20" height="2" fill="#f0f0f0"/><rect x="415" y="233" width="20" height="1" fill="#d02030"/><rect x="415" y="221" width="8" height="7" fill="#303890"/><ellipse cx="425" cy="239.5" rx="12.8" ry="7.5" fill="#10c010"/><rect x="406" y="229" width="3" height="18" fill="#10c010"/><rect x="441" y="229" width="3" height="18" fill="#10c010"/><rect x="408" y="237" width="34" height="2" fill="#10c010"/><text x="425" y="243" font-size="13" fill="#c8ffc8" text-anchor="middle" font-family="Liberation Sans">G21</text>
<rect x="417" y="246" width="20" height="5" fill="#fff"/><rect x="417" y="251" width="20" height="4" fill="#1030c0"/><rect x="417" y="255" width="20" height="4" fill="#e02020"/><ellipse cx="427" cy="264.5" rx="12.8" ry="7.5" fill="#10c010"/><rect x="408" y="254" width="3" height="18" fill="#10c010"/><rect x="443" y="254" width="3" height="18" fill="#10c010"/><rect x="410" y="262" width="34" height="2" fill="#10c010"/><text x="427" y="268" font-size="13" fill="#c8ffc8" text-anchor="middle" font-family="Liberation Sans">R21</text>
<rect x="414" y="232" width="20" height="13" fill="#2840a0"/><circle cx="424" cy="238" r="3.5" fill="none" stroke="#6070b0" stroke-width="0.8" stroke-dasharray="1 1"/><ellipse cx="424" cy="250.5" rx="12.8" ry="7.5" fill="#10c010"/><rect x="405" y="240" width="3" height="18" fill="#10c010"/><rect x="440" y="240" width="3" height="18" fill="#10c010"/><rect x="407" y="248" width="34" height="2" fill="#10c010"/><text x="424" y="254" font-size="13" fill="#c8ffc8" text-anchor="middle" font-family="Liberation Sans">E8</text>
<rect x="458" y="219" width="20" height="2" fill="#d02030"/><rect x="458" y="221" width="20" height="2" fill="#f0f0f0"/><rect x="458" y="223" width="20" height="2" fill="#d02030"/><rect x="458" y="225" width="20" height="2" fill="#f0f0f0"/><rect x="458" y="227" width="20" height="2" fill="#d02030"/><rect x="458" y="229" width="20" height="2" fill="#f0f0f0"/><rect x="458" y="231" width="20" height="1" fill="#d02030"/><rect x="458" y="219" width="8" height="7" fill="#303890"/><ellipse cx="468" cy="237.5" rx="12.8" ry="7.5" fill="#10c010"/><rect x="449" y="227" width="3" height="18" fill="#10c010"/><rect x="484" y="227" width="3" height="18" fill="#10c010"/><rect x="451" y="235" width="34" height="2" fill="#10c010"/><text x="468" y="241" font-size="13" fill="#c8ffc8" text-anchor="middle" font-family="Liberation Sans">G22</text>
<rect x="454" y="216" width="20" height="13" fill="#2840a0"/><circle cx="464" cy="222" r="3.5" fill="none" stroke="#6070b0" stroke-width="0.8" stroke-dasharray="1 1"/><ellipse cx="464" cy="234.5" rx="12.8" ry="7.5" fill="#10c010"/><rect x="445" y="224" width="3" height="18" fill="#10c010"/><rect x="480" y="224" width="3" height="18" fill="#10c010"/><rect x="447" y="232" width="34" height="2" fill="#10c010"/><text x="464" y="238" font-size="13" fill="#c8ffc8" text-anchor="middle" font-family="Liberation Sans">E15</text>
<rect x="482" y="243" width="20" height="13" fill="#fff"/><circle cx="492" cy="249" r="3.6" fill="#d00020"/><ellipse cx="492" cy="261.5" rx="12.8" ry="7.5" fill="#10c010"/><rect x="473" y="251" width="3" height="18" fill="#10c010"/><rect x="508" y="251" width="3" height="18" fill="#10c010"/><rect x="475" y="259" width="34" height="2" fill="#10c010"/><text x="492" y="265" font-size="13" fill="#c8ffc8" text-anchor="middle" font-family="Liberation Sans">Q4</text>
<rect x="367" y="255" width="20" height="2" fill="#d02030"/><rect x="367" y="257" width="20" height="2" fill="#f0f0f0"/><rect x="367" y="259" width="20" height="2" fill="#d02030"/><rect x="367" y="261" width="20" height="2" fill="#f0f0f0"/><rect x="367" y="263" width="20" height="2" fill="#d02030"/><rect x="367" y="265" width="20" height="2" fill="#f0f0f0"/><rect x="367" y="267" width="20" height="1" fill="#d02030"/><rect x="367" y="255" width="8" height="7" fill="#303890"/><ellipse cx="377" cy="273.5" rx="12.8" ry="7.5" fill="#10c010"/><rect x="358" y="263" width="3" height="18" fill="#10c010"/><rect x="393" y="263" width="3" height="18" fill="#10c010"/><rect x="360" y="271" width="34" height="2" fill="#10c010"/><text x="377" y="277" font-size="13" fill="#c8ffc8" text-anchor="middle" font-family="Liberation Sans">G17</text>
<rect x="363" y="237" width="20" height="5" fill="#fff"/><rect x="363" y="242" width="20" height="4" fill="#1030c0"/><rect x="363" y="246" width="20" height="4" fill="#e02020"/><ellipse cx="373" cy="255.5" rx="12.8" ry="7.5" fill="#10c010"/><rect x="354" y="245" width="3" height="18" fill="#10c010"/><rect x="389" y="245" width="3" height="18" fill="#10c010"/><rect x="356" y="253" width="34" height="2" fill="#10c010"/><text x="373" y="259" font-size="13" fill="#c8ffc8" text-anchor="middle" font-family="Liberation Sans">R7</text>
<rect x="408" y="281" width="20" height="13" fill="#2840a0"/><circle cx="418" cy="287" r="3.5" fill="none" stroke="#6070b0" stroke-width="0.8" stroke-dasharray="1 1"/><ellipse cx="418" cy="299.5" rx="12.8" ry="7.5" fill="#10c010"/><rect x="399" y="289" width="3" height="18" fill="#10c010"/><rect x="434" y="289" width="3" height="18" fill="#10c010"/><rect x="401" y="297" width="34" height="2" fill="#10c010"/><text x="418" y="303" font-size="13" fill="#c8ffc8" text-anchor="middle" font-family="Liberation Sans">E13</text>
<rect x="445" y="280" width="20" height="2" fill="#d02030"/><rect x="445" y="282" width="20" height="2" fill="#f0f0f0"/><rect x="445" y="284" width="20" height="2" fill="#d02030"/><rect x="445" y="286" width="20" height="2" fill="#f0f0f0"/><rect x="445" y="288" width="20" height="2" fill="#d02030"/><rect x="445" y="290" width="20" height="2" fill="#f0f0f0"/><rect x="445" y="292" width="20" height="1" fill="#d02030"/><rect x="445" y="280" width="8" height="7" fill="#303890"/><ellipse cx="455" cy="298.5" rx="12.8" ry="7.5" fill="#10c010"/><rect x="436" y="288" width="3" height="18" fill="#10c010"/><rect x="471" y="288" width="3" height="18" fill="#10c010"/><rect x="438" y="296" width="34" height="2" fill="#10c010"/><text x="455" y="302" font-size="13" fill="#c8ffc8" text-anchor="middle" font-family="Liberation Sans">G3</text>
<rect x="427" y="281" width="20" height="5" fill="#fff"/><rect x="427" y="286" width="20" height="4" fill="#1030c0"/><rect x="427" y="290" width="20" height="4" fill="#e02020"/><ellipse cx="437" cy="299.5" rx="12.8" ry="7.5" fill="#18b8c8"/><rect x="418" y="289" width="3" height="18" fill="#18b8c8"/><rect x="453" y="289" width="3" height="18" fill="#18b8c8"/><rect x="420" y="297" width="34" height="2" fill="#18b8c8"/><text x="437" y="303" font-size="13" fill="#c8ffff" text-anchor="middle" font-family="Liberation Sans">R6</text>
<rect x="478" y="276" width="20" height="13" fill="#2840a0"/><circle cx="488" cy="282" r="3.5" fill="none" stroke="#6070b0" stroke-width="0.8" stroke-dasharray="1 1"/><ellipse cx="488" cy="294.5" rx="12.8" ry="7.5" fill="#10c010"/><rect x="469" y="284" width="3" height="18" fill="#10c010"/><rect x="504" y="284" width="3" height="18" fill="#10c010"/><rect x="471" y="292" width="34" height="2" fill="#10c010"/><text x="488" y="298" font-size="13" fill="#c8ffc8" text-anchor="middle" font-family="Liberation Sans">E3</text>
<rect x="372" y="308" width="20" height="2" fill="#d02030"/><rect x="372" y="310" width="20" height="2" fill="#f0f0f0"/><rect x="372" y="312" width="20" height="2" fill="#d02030"/><rect x="372" y="314" width="20" height="2" fill="#f0f0f0"/><rect x="372" y="316" width="20" height="2" fill="#d02030"/><rect x="372" y="318" width="20" height="2" fill="#f0f0f0"/><rect x="372" y="320" width="20" height="1" fill="#d02030"/><rect x="372" y="308" width="8" height="7" fill="#303890"/><ellipse cx="382" cy="326.5" rx="12.8" ry="7.5" fill="#10c010"/><rect x="363" y="316" width="3" height="18" fill="#10c010"/><rect x="398" y="316" width="3" height="18" fill="#10c010"/><rect x="365" y="324" width="34" height="2" fill="#10c010"/><text x="382" y="330" font-size="13" fill="#c8ffc8" text-anchor="middle" font-family="Liberation Sans">G19</text>
<rect x="402" y="312" width="20" height="5" fill="#fff"/><rect x="402" y="317" width="20" height="4" fill="#1030c0"/><rect x="402" y="321" width="20" height="4" fill="#e02020"/><ellipse cx="412" cy="330.5" rx="12.8" ry="7.5" fill="#10c010"/><rect x="393" y="320" width="3" height="18" fill="#10c010"/><rect x="428" y="320" width="3" height="18" fill="#10c010"/><rect x="395" y="328" width="34" height="2" fill="#10c010"/><text x="412" y="334" font-size="13" fill="#c8ffc8" text-anchor="middle" font-family="Liberation Sans">R22</text>
<rect x="525" y="284" width="20" height="2" fill="#d02030"/><rect x="525" y="286" width="20" height="2" fill="#f0f0f0"/><rect x="525" y="288" width="20" height="2" fill="#d02030"/><rect x="525" y="290" width="20" height="2" fill="#f0f0f0"/><rect x="525" y="292" width="20" height="2" fill="#d02030"/><rect x="525" y="294" width="20" height="2" fill="#f0f0f0"/><rect x="525" y="296" width="20" height="1" fill="#d02030"/><rect x="525" y="284" width="8" height="7" fill="#303890"/><ellipse cx="535" cy="302.5" rx="12.8" ry="7.5" fill="#10c010"/><rect x="516" y="292" width="3" height="18" fill="#10c010"/><rect x="551" y="292" width="3" height="18" fill="#10c010"/><rect x="518" y="300" width="34" height="2" fill="#10c010"/><text x="535" y="306" font-size="13" fill="#c8ffc8" text-anchor="middle" font-family="Liberation Sans">G4</text>
<rect x="545" y="283" width="20" height="5" fill="#fff"/><rect x="545" y="288" width="20" height="4" fill="#1030c0"/><rect x="545" y="292" width="20" height="4" fill="#e02020"/><ellipse cx="555" cy="301.5" rx="12.8" ry="7.5" fill="#10c010"/><rect x="536" y="291" width="3" height="18" fill="#10c010"/><rect x="571" y="291" width="3" height="18" fill="#10c010"/><rect x="538" y="299" width="34" height="2" fill="#10c010"/><text x="555" y="305" font-size="13" fill="#c8ffc8" text-anchor="middle" font-family="Liberation Sans">R15</text>
<rect x="519" y="308" width="20" height="5" fill="#fff"/><rect x="519" y="313" width="20" height="4" fill="#1030c0"/><rect x="519" y="317" width="20" height="4" fill="#e02020"/><ellipse cx="529" cy="326.5" rx="12.8" ry="7.5" fill="#10c010"/><rect x="510" y="316" width="3" height="18" fill="#10c010"/><rect x="545" y="316" width="3" height="18" fill="#10c010"/><rect x="512" y="324" width="34" height="2" fill="#10c010"/><text x="529" y="330" font-size="13" fill="#c8ffc8" text-anchor="middle" font-family="Liberation Sans">R5</text>
<rect x="541" y="314" width="20" height="13" fill="#2840a0"/><circle cx="551" cy="320" r="3.5" fill="none" stroke="#6070b0" stroke-width="0.8" stroke-dasharray="1 1"/><ellipse cx="551" cy="332.5" rx="12.8" ry="7.5" fill="#10c010"/><rect x="532" y="322" width="3" height="18" fill="#10c010"/><rect x="567" y="322" width="3" height="18" fill="#10c010"/><rect x="534" y="330" width="34" height="2" fill="#10c010"/><text x="551" y="336" font-size="13" fill="#c8ffc8" text-anchor="middle" font-family="Liberation Sans">E5</text>
</g>
<rect x="54" y="477" width="21" height="103" fill="#00c000"/>
<rect x="54" y="477" width="21" height="1" fill="#80ff80" opacity="0.6"/>
<rect x="75" y="502" width="22" height="78" fill="#00c000"/>
<rect x="75" y="502" width="22" height="1" fill="#80ff80" opacity="0.6"/>
<rect x="118" y="509" width="22" height="71" fill="#00c000"/>
<rect x="118" y="509" width="22" height="1" fill="#80ff80" opacity="0.6"/>
<rect x="140" y="493" width="22" height="87" fill="#00c000"/>
<rect x="140" y="493" width="22" height="1" fill="#80ff80" opacity="0.6"/>
<rect x="162" y="473" width="21" height="107" fill="#00c000"/>
<rect x="162" y="473" width="21" height="1" fill="#80ff80" opacity="0.6"/>
<rect x="162" y="469" width="21" height="1" fill="#e8e0e8"/>
<rect x="183" y="531" width="22" height="49" fill="#00c000"/>
<rect x="183" y="531" width="22" height="1" fill="#80ff80" opacity="0.6"/>
<rect x="205" y="496" width="21" height="84" fill="#00c000"/>
<rect x="205" y="496" width="21" height="1" fill="#80ff80" opacity="0.6"/>
<rect x="226" y="515" width="22" height="65" fill="#00c000"/>
<rect x="226" y="515" width="22" height="1" fill="#80ff80" opacity="0.6"/>
<rect x="270" y="483" width="21" height="97" fill="#00c0c0"/>
<rect x="270" y="483" width="21" height="1" fill="#80ffff" opacity="0.6"/>
<rect x="270" y="479" width="21" height="1" fill="#e8e0e8"/>
<rect x="291" y="502" width="22" height="78" fill="#00c000"/>
<rect x="291" y="502" width="22" height="1" fill="#80ff80" opacity="0.6"/>
<rect x="335" y="512" width="21" height="68" fill="#00c000"/>
<rect x="335" y="512" width="21" height="1" fill="#80ff80" opacity="0.6"/>
<rect x="356" y="496" width="22" height="84" fill="#00c000"/>
<rect x="356" y="496" width="22" height="1" fill="#80ff80" opacity="0.6"/>
<rect x="378" y="548" width="21" height="32" fill="#00c000"/>
<rect x="378" y="548" width="21" height="1" fill="#80ff80" opacity="0.6"/>
<rect x="378" y="540" width="21" height="1" fill="#e8e0e8"/>
<rect x="421" y="483" width="22" height="97" fill="#00c000"/>
<rect x="421" y="483" width="22" height="1" fill="#80ff80" opacity="0.6"/>
<rect x="443" y="489" width="21" height="91" fill="#00c0c0"/>
<rect x="443" y="489" width="21" height="1" fill="#80ffff" opacity="0.6"/>
<rect x="464" y="493" width="22" height="87" fill="#00c000"/>
<rect x="464" y="493" width="22" height="1" fill="#80ff80" opacity="0.6"/>
<rect x="486" y="528" width="22" height="52" fill="#00c000"/>
<rect x="486" y="528" width="22" height="1" fill="#80ff80" opacity="0.6"/>
<rect x="486" y="522" width="22" height="1" fill="#e8e0e8"/>
<rect x="508" y="486" width="21" height="94" fill="#00c000"/>
<rect x="508" y="486" width="21" height="1" fill="#80ff80" opacity="0.6"/>
<rect x="529" y="489" width="22" height="91" fill="#00c000"/>
<rect x="529" y="489" width="22" height="1" fill="#80ff80" opacity="0.6"/>
<rect x="551" y="489" width="21" height="91" fill="#00c000"/>
<rect x="551" y="489" width="21" height="1" fill="#80ff80" opacity="0.6"/>
<rect x="572" y="464" width="22" height="116" fill="#00c000"/>
<rect x="572" y="464" width="22" height="1" fill="#80ff80" opacity="0.6"/>
<rect x="594" y="554" width="22" height="26" fill="#00c000"/>
<rect x="594" y="554" width="22" height="1" fill="#80ff80" opacity="0.6"/>
<rect x="594" y="543" width="22" height="1" fill="#e8e0e8"/>
<rect x="616" y="528" width="21" height="52" fill="#00c000"/>
<rect x="616" y="528" width="21" height="1" fill="#80ff80" opacity="0.6"/>
<rect x="637" y="512" width="22" height="68" fill="#0000c0"/>
<rect x="637" y="512" width="22" height="1" fill="#8080ff" opacity="0.6"/>
<rect x="659" y="551" width="22" height="29" fill="#00c000"/>
<rect x="659" y="551" width="22" height="1" fill="#80ff80" opacity="0.6"/>
<rect x="659" y="534" width="22" height="1" fill="#e8e0e8"/>
<rect x="681" y="535" width="21" height="45" fill="#00c000"/>
<rect x="681" y="535" width="21" height="1" fill="#80ff80" opacity="0.6"/>
<rect x="745" y="525" width="22" height="55" fill="#00c000"/>
<rect x="745" y="525" width="22" height="1" fill="#80ff80" opacity="0.6"/>
<rect x="745" y="519" width="22" height="1" fill="#e8e0e8"/>
<rect x="767" y="509" width="22" height="71" fill="#00c000"/>
<rect x="767" y="509" width="22" height="1" fill="#80ff80" opacity="0.6"/>
<rect x="767" y="506" width="22" height="1" fill="#e8e0e8"/>
<rect x="789" y="541" width="21" height="39" fill="#00c0c0"/>
<rect x="789" y="541" width="21" height="1" fill="#80ffff" opacity="0.6"/>
<rect x="832" y="506" width="22" height="74" fill="#00c000"/>
<rect x="832" y="506" width="22" height="1" fill="#80ff80" opacity="0.6"/>
<line x1="54" y1="564.5" x2="854" y2="564.5" stroke="#e0e0e0" stroke-width="1" stroke-dasharray="3 3" shape-rendering="crispEdges"/>
<text x="856" y="568.5" font-size="11" fill="#e0e0e0" font-family="Liberation Sans">10</text>
<line x1="54" y1="531.5" x2="854" y2="531.5" stroke="#e0e0e0" stroke-width="1" stroke-dasharray="3 3" shape-rendering="crispEdges"/>
<text x="856" y="535.5" font-size="11" fill="#e0e0e0" font-family="Liberation Sans">20</text>
<line x1="54" y1="499.5" x2="854" y2="499.5" stroke="#e0e0e0" stroke-width="1" stroke-dasharray="3 3" shape-rendering="crispEdges"/>
<text x="856" y="503.5" font-size="11" fill="#e0e0e0" font-family="Liberation Sans">30</text>
<line x1="54" y1="467.5" x2="854" y2="467.5" stroke="#e0e0e0" stroke-width="1" stroke-dasharray="3 3" shape-rendering="crispEdges"/>
<text x="856" y="471.5" font-size="11" fill="#e0e0e0" font-family="Liberation Sans">40</text>
<line x1="54" y1="435.5" x2="854" y2="435.5" stroke="#e0e0e0" stroke-width="1" stroke-dasharray="3 3" shape-rendering="crispEdges"/>
<text x="856" y="439.5" font-size="11" fill="#e0e0e0" font-family="Liberation Sans">50</text>
<rect x="54" y="418" width="1" height="162" fill="#e0e0e0"/>
<rect x="75" y="418" width="1" height="162" fill="#e0e0e0"/>
<rect x="97" y="418" width="1" height="162" fill="#e0e0e0"/>
<rect x="118" y="418" width="1" height="162" fill="#e0e0e0"/>
<rect x="140" y="418" width="1" height="162" fill="#e0e0e0"/>
<rect x="162" y="418" width="1" height="162" fill="#e0e0e0"/>
<rect x="183" y="418" width="1" height="162" fill="#e0e0e0"/>
<rect x="205" y="418" width="1" height="162" fill="#e0e0e0"/>
<rect x="226" y="418" width="1" height="162" fill="#e0e0e0"/>
<rect x="248" y="418" width="1" height="162" fill="#e0e0e0"/>
<rect x="270" y="418" width="1" height="162" fill="#e0e0e0"/>
<rect x="291" y="418" width="1" height="162" fill="#e0e0e0"/>
<rect x="313" y="418" width="1" height="162" fill="#e0e0e0"/>
<rect x="335" y="418" width="1" height="162" fill="#e0e0e0"/>
<rect x="356" y="418" width="1" height="162" fill="#e0e0e0"/>
<rect x="378" y="418" width="1" height="162" fill="#e0e0e0"/>
<rect x="399" y="418" width="1" height="162" fill="#e0e0e0"/>
<rect x="421" y="418" width="1" height="162" fill="#e0e0e0"/>
<rect x="443" y="418" width="1" height="162" fill="#e0e0e0"/>
<rect x="464" y="418" width="1" height="162" fill="#e0e0e0"/>
<rect x="486" y="418" width="1" height="162" fill="#e0e0e0"/>
<rect x="508" y="418" width="1" height="162" fill="#e0e0e0"/>
<rect x="529" y="418" width="1" height="162" fill="#e0e0e0"/>
<rect x="551" y="418" width="1" height="162" fill="#e0e0e0"/>
<rect x="572" y="418" width="1" height="162" fill="#e0e0e0"/>
<rect x="594" y="418" width="1" height="162" fill="#e0e0e0"/>
<rect x="616" y="418" width="1" height="162" fill="#e0e0e0"/>
<rect x="637" y="418" width="1" height="162" fill="#e0e0e0"/>
<rect x="659" y="418" width="1" height="162" fill="#e0e0e0"/>
<rect x="681" y="418" width="1" height="162" fill="#e0e0e0"/>
<rect x="702" y="418" width="1" height="162" fill="#e0e0e0"/>
<rect x="724" y="418" width="1" height="162" fill="#e0e0e0"/>
<rect x="745" y="418" width="1" height="162" fill="#e0e0e0"/>
<rect x="767" y="418" width="1" height="162" fill="#e0e0e0"/>
<rect x="789" y="418" width="1" height="162" fill="#e0e0e0"/>
<rect x="810" y="418" width="1" height="162" fill="#e0e0e0"/>
<rect x="832" y="418" width="1" height="162" fill="#e0e0e0"/>
<rect x="854" y="418" width="1" height="162" fill="#e0e0e0"/>
<rect x="54" y="418" width="801" height="1" fill="#e0e0e0"/>
<rect x="54" y="579" width="801" height="1" fill="#e0e0e0"/>
<g transform="translate(65.3,591) scale(0.85,1)"><text x="0" y="0" font-size="12" fill="#e8e8e8" text-anchor="middle" font-family="Liberation Sans">G1</text></g>
<text x="65.3" y="576" font-size="12" fill="#001800" text-anchor="middle" font-family="Liberation Sans">37</text>
<g transform="translate(86.9,591) scale(0.85,1)"><text x="0" y="0" font-size="12" fill="#e8e8e8" text-anchor="middle" font-family="Liberation Sans">G3</text></g>
<text x="86.9" y="576" font-size="12" fill="#001800" text-anchor="middle" font-family="Liberation Sans">29</text>
<g transform="translate(130.2,591) scale(0.85,1)"><text x="0" y="0" font-size="12" fill="#e8e8e8" text-anchor="middle" font-family="Liberation Sans">R7</text></g>
<text x="130.2" y="576" font-size="12" fill="#001800" text-anchor="middle" font-family="Liberation Sans">27</text>
<g transform="translate(151.8,591) scale(0.85,1)"><text x="0" y="0" font-size="12" fill="#e8e8e8" text-anchor="middle" font-family="Liberation Sans">R22</text></g>
<text x="151.8" y="576" font-size="12" fill="#001800" text-anchor="middle" font-family="Liberation Sans">32</text>
<g transform="translate(173.4,591) scale(0.85,1)"><text x="0" y="0" font-size="12" fill="#e8e8e8" text-anchor="middle" font-family="Liberation Sans">G21</text></g>
<text x="173.4" y="576" font-size="12" fill="#001800" text-anchor="middle" font-family="Liberation Sans">38</text>
<g transform="translate(195.0,591) scale(0.85,1)"><text x="0" y="0" font-size="12" fill="#e8e8e8" text-anchor="middle" font-family="Liberation Sans">G22</text></g>
<text x="195.0" y="576" font-size="12" fill="#001800" text-anchor="middle" font-family="Liberation Sans">20</text>
<g transform="translate(216.7,591) scale(0.85,1)"><text x="0" y="0" font-size="12" fill="#e8e8e8" text-anchor="middle" font-family="Liberation Sans">G17</text></g>
<text x="216.7" y="576" font-size="12" fill="#001800" text-anchor="middle" font-family="Liberation Sans">31</text>
<g transform="translate(238.3,591) scale(0.85,1)"><text x="0" y="0" font-size="12" fill="#e8e8e8" text-anchor="middle" font-family="Liberation Sans">E7</text></g>
<text x="238.3" y="576" font-size="12" fill="#001800" text-anchor="middle" font-family="Liberation Sans">25</text>
<g transform="translate(259.9,591) scale(0.85,1)"><text x="0" y="0" font-size="12" fill="#e8e8e8" text-anchor="middle" font-family="Liberation Sans">S129</text></g>
<g transform="translate(281.5,591) scale(0.85,1)"><text x="0" y="0" font-size="12" fill="#e8e8e8" text-anchor="middle" font-family="Liberation Sans">S128</text></g>
<text x="281.5" y="576" font-size="12" fill="#001800" text-anchor="middle" font-family="Liberation Sans">35</text>
<g transform="translate(303.1,591) scale(0.85,1)"><text x="0" y="0" font-size="12" fill="#e8e8e8" text-anchor="middle" font-family="Liberation Sans">G31</text></g>
<text x="303.1" y="576" font-size="12" fill="#001800" text-anchor="middle" font-family="Liberation Sans">29</text>
<g transform="translate(324.8,591) scale(0.85,1)"><text x="0" y="0" font-size="12" fill="#e8e8e8" text-anchor="middle" font-family="Liberation Sans">S137</text></g>
<g transform="translate(346.4,591) scale(0.85,1)"><text x="0" y="0" font-size="12" fill="#e8e8e8" text-anchor="middle" font-family="Liberation Sans">E13</text></g>
<text x="346.4" y="576" font-size="12" fill="#001800" text-anchor="middle" font-family="Liberation Sans">26</text>
<g transform="translate(368.0,591) scale(0.85,1)"><text x="0" y="0" font-size="12" fill="#e8e8e8" text-anchor="middle" font-family="Liberation Sans">E3</text></g>
<text x="368.0" y="576" font-size="12" fill="#001800" text-anchor="middle" font-family="Liberation Sans">31</text>
<g transform="translate(389.6,591) scale(0.85,1)"><text x="0" y="0" font-size="12" fill="#e8e8e8" text-anchor="middle" font-family="Liberation Sans">E5</text></g>
<text x="389.6" y="576" font-size="12" fill="#001800" text-anchor="middle" font-family="Liberation Sans">15</text>
<g transform="translate(432.9,591) scale(0.85,1)"><text x="0" y="0" font-size="12" fill="#e8e8e8" text-anchor="middle" font-family="Liberation Sans">E15</text></g>
<text x="432.9" y="576" font-size="12" fill="#001800" text-anchor="middle" font-family="Liberation Sans">35</text>
<g transform="translate(454.5,591) scale(0.85,1)"><text x="0" y="0" font-size="12" fill="#e8e8e8" text-anchor="middle" font-family="Liberation Sans">E18</text></g>
<text x="454.5" y="576" font-size="12" fill="#001800" text-anchor="middle" font-family="Liberation Sans">33</text>
<g transform="translate(476.1,591) scale(0.85,1)"><text x="0" y="0" font-size="12" fill="#e8e8e8" text-anchor="middle" font-family="Liberation Sans">G9</text></g>
<text x="476.1" y="576" font-size="12" fill="#001800" text-anchor="middle" font-family="Liberation Sans">32</text>
<g transform="translate(497.7,591) scale(0.85,1)"><text x="0" y="0" font-size="12" fill="#e8e8e8" text-anchor="middle" font-family="Liberation Sans">R15</text></g>
<text x="497.7" y="576" font-size="12" fill="#001800" text-anchor="middle" font-family="Liberation Sans">21</text>
<g transform="translate(519.4,591) scale(0.85,1)"><text x="0" y="0" font-size="12" fill="#e8e8e8" text-anchor="middle" font-family="Liberation Sans">E34</text></g>
<text x="519.4" y="576" font-size="12" fill="#001800" text-anchor="middle" font-family="Liberation Sans">34</text>
<g transform="translate(541.0,591) scale(0.85,1)"><text x="0" y="0" font-size="12" fill="#e8e8e8" text-anchor="middle" font-family="Liberation Sans">G19</text></g>
<text x="541.0" y="576" font-size="12" fill="#001800" text-anchor="middle" font-family="Liberation Sans">33</text>
<g transform="translate(562.6,591) scale(0.85,1)"><text x="0" y="0" font-size="12" fill="#e8e8e8" text-anchor="middle" font-family="Liberation Sans">Q2</text></g>
<text x="562.6" y="576" font-size="12" fill="#001800" text-anchor="middle" font-family="Liberation Sans">33</text>
<g transform="translate(584.2,591) scale(0.85,1)"><text x="0" y="0" font-size="12" fill="#e8e8e8" text-anchor="middle" font-family="Liberation Sans">Q3</text></g>
<text x="584.2" y="576" font-size="12" fill="#001800" text-anchor="middle" font-family="Liberation Sans">41</text>
<g transform="translate(605.9,591) scale(0.85,1)"><text x="0" y="0" font-size="12" fill="#e8e8e8" text-anchor="middle" font-family="Liberation Sans">Q4</text></g>
<text x="605.9" y="576" font-size="12" fill="#001800" text-anchor="middle" font-family="Liberation Sans">13</text>
<g transform="translate(627.5,591) scale(0.85,1)"><text x="0" y="0" font-size="12" fill="#e8e8e8" text-anchor="middle" font-family="Liberation Sans">R21</text></g>
<text x="627.5" y="576" font-size="12" fill="#001800" text-anchor="middle" font-family="Liberation Sans">21</text>
<g transform="translate(649.1,591) scale(0.85,1)"><text x="0" y="0" font-size="12" fill="#e8e8e8" text-anchor="middle" font-family="Liberation Sans">R?</text></g>
<text x="649.1" y="576" font-size="12" fill="#000060" text-anchor="middle" font-family="Liberation Sans">26</text>
<g transform="translate(670.7,591) scale(0.85,1)"><text x="0" y="0" font-size="12" fill="#e8e8e8" text-anchor="middle" font-family="Liberation Sans">R5</text></g>
<text x="670.7" y="576" font-size="12" fill="#001800" text-anchor="middle" font-family="Liberation Sans">14</text>
<g transform="translate(692.3,591) scale(0.85,1)"><text x="0" y="0" font-size="12" fill="#e8e8e8" text-anchor="middle" font-family="Liberation Sans">R16</text></g>
<text x="692.3" y="576" font-size="12" fill="#001800" text-anchor="middle" font-family="Liberation Sans">19</text>
<g transform="translate(757.2,591) scale(0.85,1)"><text x="0" y="0" font-size="12" fill="#e8e8e8" text-anchor="middle" font-family="Liberation Sans">R20</text></g>
<text x="757.2" y="576" font-size="12" fill="#001800" text-anchor="middle" font-family="Liberation Sans">22</text>
<g transform="translate(778.8,591) scale(0.85,1)"><text x="0" y="0" font-size="12" fill="#e8e8e8" text-anchor="middle" font-family="Liberation Sans">E8</text></g>
<text x="778.8" y="576" font-size="12" fill="#001800" text-anchor="middle" font-family="Liberation Sans">27</text>
<g transform="translate(800.4,591) scale(0.85,1)"><text x="0" y="0" font-size="12" fill="#e8e8e8" text-anchor="middle" font-family="Liberation Sans">R6</text></g>
<text x="800.4" y="576" font-size="12" fill="#001800" text-anchor="middle" font-family="Liberation Sans">17</text>
<g transform="translate(822.1,591) scale(0.85,1)"><text x="0" y="0" font-size="12" fill="#e8e8e8" text-anchor="middle" font-family="Liberation Sans">S127</text></g>
<g transform="translate(843.7,591) scale(0.85,1)"><text x="0" y="0" font-size="12" fill="#e8e8e8" text-anchor="middle" font-family="Liberation Sans">G4</text></g>
<text x="843.7" y="576" font-size="12" fill="#001800" text-anchor="middle" font-family="Liberation Sans">28</text>
<text x="856" y="591" font-size="11" fill="#e0e0e0" font-family="Liberation Sans">dB</text>
<rect x="957" y="120" width="55" height="12" fill="#404040"/>
<text x="886" y="130.7" font-size="11" fill="#e0e0e0" font-family="Liberation Sans">Longitude</text>
<rect x="957" y="133" width="55" height="12" fill="#404040"/>
<text x="886" y="143.7" font-size="11" fill="#e0e0e0" font-family="Liberation Sans">Latitude</text>
<rect x="957" y="146" width="55" height="12" fill="#404040"/>
<text x="886" y="156.7" font-size="11" fill="#e0e0e0" font-family="Liberation Sans">Altitude</text>
<rect x="957" y="159" width="55" height="12" fill="#404040"/>
<text x="886" y="169.7" font-size="11" fill="#e0e0e0" font-family="Liberation Sans">TTFF</text>
<rect x="957" y="172" width="55" height="12" fill="#404040"/>
<text x="886" y="182.7" font-size="11" fill="#e0e0e0" font-family="Liberation Sans">Fix Mode</text>
<rect x="957" y="185" width="55" height="12" fill="#404040"/>
<text x="886" y="195.7" font-size="11" fill="#e0e0e0" font-family="Liberation Sans">3D Acc. [m]</text>
<rect x="957" y="198" width="55" height="12" fill="#404040"/>
<text x="886" y="208.7" font-size="11" fill="#e0e0e0" font-family="Liberation Sans">2D Acc. [m]</text>
<rect x="957" y="211" width="55" height="12" fill="#404040"/>
<text x="886" y="221.7" font-size="11" fill="#e0e0e0" font-family="Liberation Sans">PDOP</text>
<rect x="957" y="224" width="55" height="12" fill="#404040"/>
<text x="886" y="234.7" font-size="11" fill="#e0e0e0" font-family="Liberation Sans">HDOP</text>
<text x="886" y="247.7" font-size="11" fill="#e0e0e0" font-family="Liberation Sans">Satellites</text>
<text x="1012" y="130.7" font-size="11" fill="#e0e0e0" text-anchor="end" font-family="Liberation Sans">115.74938210 °</text>
<text x="1012" y="143.7" font-size="11" fill="#e0e0e0" text-anchor="end" font-family="Liberation Sans">-32.56292390 °</text>
<text x="1012" y="156.7" font-size="11" fill="#e0e0e0" text-anchor="end" font-family="Liberation Sans">-34.235 m</text>
<text x="1012" y="182.7" font-size="11" fill="#20d020" text-anchor="end" font-family="Liberation Sans">3D</text>
<text x="957" y="195.7" font-size="11" fill="#e0e0e0" font-family="Liberation Sans">0</text>
<rect x="975" y="187" width="3" height="9" fill="#10c010"/>
<text x="979" y="195.7" font-size="11" fill="#e0e0e0" font-family="Liberation Sans">1.74</text>
<text x="1005" y="195.7" font-size="11" fill="#e0e0e0" font-family="Liberation Sans">5</text>
<text x="957" y="208.7" font-size="11" fill="#e0e0e0" font-family="Liberation Sans">0</text>
<rect x="967" y="200" width="3" height="9" fill="#10c010"/>
<text x="972" y="208.7" font-size="11" fill="#e0e0e0" font-family="Liberation Sans">1.13</text>
<text x="1005" y="208.7" font-size="11" fill="#e0e0e0" font-family="Liberation Sans">5</text>
<text x="957" y="221.7" font-size="11" fill="#e0e0e0" font-family="Liberation Sans">0</text>
<rect x="980" y="213" width="3" height="9" fill="#10c010"/>
<text x="985" y="221.7" font-size="11" fill="#e0e0e0" font-family="Liberation Sans">0.9</text>
<text x="1005" y="221.7" font-size="11" fill="#e0e0e0" font-family="Liberation Sans">2</text>
<line x1="938.54" y1="380.46" x2="937.13" y2="381.87" stroke="#a0a0a0" stroke-width="0.8"/><line x1="936.68" y1="378.21" x2="935.03" y2="379.34" stroke="#a0a0a0" stroke-width="0.8"/><line x1="935.27" y1="375.66" x2="933.44" y2="376.45" stroke="#a0a0a0" stroke-width="0.8"/><line x1="934.37" y1="372.88" x2="932.42" y2="373.32" stroke="#a0a0a0" stroke-width="0.8"/><line x1="934.01" y1="369.99" x2="932.01" y2="370.05" stroke="#a0a0a0" stroke-width="0.8"/><line x1="934.19" y1="367.08" x2="932.22" y2="366.76" stroke="#a0a0a0" stroke-width="0.8"/><line x1="934.92" y1="364.25" x2="933.03" y2="363.57" stroke="#a0a0a0" stroke-width="0.8"/><line x1="936.16" y1="361.61" x2="934.44" y2="360.59" stroke="#a0a0a0" stroke-width="0.8"/><line x1="937.87" y1="359.25" x2="936.37" y2="357.93" stroke="#a0a0a0" stroke-width="0.8"/><line x1="940.00" y1="357.25" x2="938.77" y2="355.67" stroke="#a0a0a0" stroke-width="0.8"/><line x1="942.46" y1="355.69" x2="941.56" y2="353.91" stroke="#a0a0a0" stroke-width="0.8"/><line x1="945.18" y1="354.62" x2="944.62" y2="352.69" stroke="#a0a0a0" stroke-width="0.8"/><line x1="948.04" y1="354.07" x2="947.85" y2="352.08" stroke="#a0a0a0" stroke-width="0.8"/><line x1="950.96" y1="354.07" x2="951.15" y2="352.08" stroke="#a0a0a0" stroke-width="0.8"/><line x1="953.82" y1="354.62" x2="954.38" y2="352.69" stroke="#a0a0a0" stroke-width="0.8"/><line x1="956.54" y1="355.69" x2="957.44" y2="353.91" stroke="#a0a0a0" stroke-width="0.8"/><line x1="959.00" y1="357.25" x2="960.23" y2="355.67" stroke="#a0a0a0" stroke-width="0.8"/><line x1="961.13" y1="359.25" x2="962.63" y2="357.93" stroke="#a0a0a0" stroke-width="0.8"/><line x1="962.84" y1="361.61" x2="964.56" y2="360.59" stroke="#a0a0a0" stroke-width="0.8"/><line x1="964.08" y1="364.25" x2="965.97" y2="363.57" stroke="#a0a0a0" stroke-width="0.8"/><line x1="964.81" y1="367.08" x2="966.78" y2="366.76" stroke="#a0a0a0" stroke-width="0.8"/><line x1="964.99" y1="369.99" x2="966.99" y2="370.05" stroke="#a0a0a0" stroke-width="0.8"/><line x1="964.63" y1="372.88" x2="966.58" y2="373.32" stroke="#a0a0a0" stroke-width="0.8"/><line x1="963.73" y1="375.66" x2="965.56" y2="376.45" stroke="#a0a0a0" stroke-width="0.8"/><line x1="962.32" y1="378.21" x2="963.97" y2="379.34" stroke="#a0a0a0" stroke-width="0.8"/><line x1="960.46" y1="380.46" x2="961.87" y2="381.87" stroke="#a0a0a0" stroke-width="0.8"/>
<line x1="939.60" y1="379.40" x2="936.77" y2="382.23" stroke="#e0e0e0" stroke-width="1"/><line x1="935.67" y1="367.31" x2="931.72" y2="366.68" stroke="#e0e0e0" stroke-width="1"/><line x1="943.14" y1="357.03" x2="941.33" y2="353.46" stroke="#e0e0e0" stroke-width="1"/><line x1="955.86" y1="357.03" x2="957.67" y2="353.46" stroke="#e0e0e0" stroke-width="1"/><line x1="963.33" y1="367.31" x2="967.28" y2="366.68" stroke="#e0e0e0" stroke-width="1"/><line x1="959.40" y1="379.40" x2="962.23" y2="382.23" stroke="#e0e0e0" stroke-width="1"/>
<circle cx="949.5" cy="369.5" r="3.2" fill="none" stroke="#e0e0e0" stroke-width="1.2"/>
<line x1="947.0" y1="372.0" x2="934" y2="384" stroke="#e0e0e0" stroke-width="2.5"/>
<line x1="947.0" y1="372.0" x2="934" y2="384" stroke="#000" stroke-width="0.8"/>
<text x="931" y="392" font-size="11" fill="#e0e0e0" text-anchor="middle" font-family="Liberation Sans">0</text>
<text x="924" y="370" font-size="11" fill="#e0e0e0" text-anchor="middle" font-family="Liberation Sans">50</text>
<text x="940" y="352" font-size="11" fill="#e0e0e0" text-anchor="middle" font-family="Liberation Sans">100</text>
<text x="961" y="352" font-size="11" fill="#e0e0e0" text-anchor="middle" font-family="Liberation Sans">150</text>
<text x="976" y="370" font-size="11" fill="#e0e0e0" text-anchor="middle" font-family="Liberation Sans">200</text>
<text x="967" y="392" font-size="11" fill="#e0e0e0" text-anchor="middle" font-family="Liberation Sans">250</text>
<text x="949" y="402" font-size="11" fill="#e0e0e0" text-anchor="middle" font-family="Liberation Sans">0.03 m/s = 0.1 km/h</text>
<line x1="966.00" y1="464.50" x2="967.50" y2="464.50" stroke="#909090" stroke-width="0.8"/><line x1="965.87" y1="466.51" x2="967.36" y2="466.69" stroke="#909090" stroke-width="0.8"/><line x1="965.50" y1="468.48" x2="966.95" y2="468.85" stroke="#909090" stroke-width="0.8"/><line x1="964.88" y1="470.39" x2="966.27" y2="470.94" stroke="#909090" stroke-width="0.8"/><line x1="964.02" y1="472.21" x2="965.34" y2="472.93" stroke="#909090" stroke-width="0.8"/><line x1="962.94" y1="473.90" x2="964.16" y2="474.79" stroke="#909090" stroke-width="0.8"/><line x1="961.66" y1="475.45" x2="962.76" y2="476.48" stroke="#909090" stroke-width="0.8"/><line x1="960.20" y1="476.83" x2="961.15" y2="477.98" stroke="#909090" stroke-width="0.8"/><line x1="958.57" y1="478.01" x2="959.38" y2="479.28" stroke="#909090" stroke-width="0.8"/><line x1="956.81" y1="478.98" x2="957.45" y2="480.33" stroke="#909090" stroke-width="0.8"/><line x1="954.94" y1="479.72" x2="955.41" y2="481.14" stroke="#909090" stroke-width="0.8"/><line x1="953.00" y1="480.22" x2="953.28" y2="481.69" stroke="#909090" stroke-width="0.8"/><line x1="951.00" y1="480.47" x2="951.10" y2="481.97" stroke="#909090" stroke-width="0.8"/><line x1="949.00" y1="480.47" x2="948.90" y2="481.97" stroke="#909090" stroke-width="0.8"/><line x1="947.00" y1="480.22" x2="946.72" y2="481.69" stroke="#909090" stroke-width="0.8"/><line x1="945.06" y1="479.72" x2="944.59" y2="481.14" stroke="#909090" stroke-width="0.8"/><line x1="943.19" y1="478.98" x2="942.55" y2="480.33" stroke="#909090" stroke-width="0.8"/><line x1="941.43" y1="478.01" x2="940.62" y2="479.28" stroke="#909090" stroke-width="0.8"/><line x1="939.80" y1="476.83" x2="938.85" y2="477.98" stroke="#909090" stroke-width="0.8"/><line x1="938.34" y1="475.45" x2="937.24" y2="476.48" stroke="#909090" stroke-width="0.8"/><line x1="937.06" y1="473.90" x2="935.84" y2="474.79" stroke="#909090" stroke-width="0.8"/><line x1="935.98" y1="472.21" x2="934.66" y2="472.93" stroke="#909090" stroke-width="0.8"/><line x1="935.12" y1="470.39" x2="933.73" y2="470.94" stroke="#909090" stroke-width="0.8"/><line x1="934.50" y1="468.48" x2="933.05" y2="468.85" stroke="#909090" stroke-width="0.8"/><line x1="934.13" y1="466.51" x2="932.64" y2="466.69" stroke="#909090" stroke-width="0.8"/><line x1="934.00" y1="464.50" x2="932.50" y2="464.50" stroke="#909090" stroke-width="0.8"/><line x1="934.13" y1="462.49" x2="932.64" y2="462.31" stroke="#909090" stroke-width="0.8"/><line x1="934.50" y1="460.52" x2="933.05" y2="460.15" stroke="#909090" stroke-width="0.8"/><line x1="935.12" y1="458.61" x2="933.73" y2="458.06" stroke="#909090" stroke-width="0.8"/><line x1="935.98" y1="456.79" x2="934.66" y2="456.07" stroke="#909090" stroke-width="0.8"/><line x1="937.06" y1="455.10" x2="935.84" y2="454.21" stroke="#909090" stroke-width="0.8"/><line x1="938.34" y1="453.55" x2="937.24" y2="452.52" stroke="#909090" stroke-width="0.8"/><line x1="939.80" y1="452.17" x2="938.85" y2="451.02" stroke="#909090" stroke-width="0.8"/><line x1="941.43" y1="450.99" x2="940.62" y2="449.72" stroke="#909090" stroke-width="0.8"/><line x1="943.19" y1="450.02" x2="942.55" y2="448.67" stroke="#909090" stroke-width="0.8"/><line x1="945.06" y1="449.28" x2="944.59" y2="447.86" stroke="#909090" stroke-width="0.8"/><line x1="947.00" y1="448.78" x2="946.72" y2="447.31" stroke="#909090" stroke-width="0.8"/><line x1="949.00" y1="448.53" x2="948.90" y2="447.03" stroke="#909090" stroke-width="0.8"/><line x1="951.00" y1="448.53" x2="951.10" y2="447.03" stroke="#909090" stroke-width="0.8"/><line x1="953.00" y1="448.78" x2="953.28" y2="447.31" stroke="#909090" stroke-width="0.8"/><line x1="954.94" y1="449.28" x2="955.41" y2="447.86" stroke="#909090" stroke-width="0.8"/><line x1="956.81" y1="450.02" x2="957.45" y2="448.67" stroke="#909090" stroke-width="0.8"/><line x1="958.57" y1="450.99" x2="959.38" y2="449.72" stroke="#909090" stroke-width="0.8"/><line x1="960.20" y1="452.17" x2="961.15" y2="451.02" stroke="#909090" stroke-width="0.8"/><line x1="961.66" y1="453.55" x2="962.76" y2="452.52" stroke="#909090" stroke-width="0.8"/><line x1="962.94" y1="455.10" x2="964.16" y2="454.21" stroke="#909090" stroke-width="0.8"/><line x1="964.02" y1="456.79" x2="965.34" y2="456.07" stroke="#909090" stroke-width="0.8"/><line x1="964.88" y1="458.61" x2="966.27" y2="458.06" stroke="#909090" stroke-width="0.8"/><line x1="965.50" y1="460.52" x2="966.95" y2="460.15" stroke="#909090" stroke-width="0.8"/><line x1="965.87" y1="462.49" x2="967.36" y2="462.31" stroke="#909090" stroke-width="0.8"/><line x1="966.00" y1="464.50" x2="967.50" y2="464.50" stroke="#909090" stroke-width="0.8"/>
<line x1="950.00" y1="450.50" x2="950.00" y2="446.50" stroke="#e0e0e0" stroke-width="1"/><line x1="958.23" y1="453.17" x2="960.58" y2="449.94" stroke="#e0e0e0" stroke-width="1"/><line x1="963.31" y1="460.17" x2="967.12" y2="458.94" stroke="#e0e0e0" stroke-width="1"/><line x1="963.31" y1="468.83" x2="967.12" y2="470.06" stroke="#e0e0e0" stroke-width="1"/><line x1="958.23" y1="475.83" x2="960.58" y2="479.06" stroke="#e0e0e0" stroke-width="1"/><line x1="950.00" y1="478.50" x2="950.00" y2="482.50" stroke="#e0e0e0" stroke-width="1"/><line x1="941.77" y1="475.83" x2="939.42" y2="479.06" stroke="#e0e0e0" stroke-width="1"/><line x1="936.69" y1="468.83" x2="932.88" y2="470.06" stroke="#e0e0e0" stroke-width="1"/><line x1="936.69" y1="460.17" x2="932.88" y2="458.94" stroke="#e0e0e0" stroke-width="1"/><line x1="941.77" y1="453.17" x2="939.42" y2="449.94" stroke="#e0e0e0" stroke-width="1"/><line x1="950.00" y1="450.50" x2="950.00" y2="446.50" stroke="#e0e0e0" stroke-width="1"/>
<text x="950.0" y="444.0" font-size="11" fill="#e0e0e0" text-anchor="middle" font-family="Liberation Sans">0</text>
<text x="964.6946313073119" y="448.7745751406263" font-size="11" fill="#e0e0e0" text-anchor="middle" font-family="Liberation Sans">1</text>
<text x="973.7764129073788" y="461.2745751406263" font-size="11" fill="#e0e0e0" text-anchor="middle" font-family="Liberation Sans">2</text>
<text x="973.7764129073788" y="476.7254248593737" font-size="11" fill="#e0e0e0" text-anchor="middle" font-family="Liberation Sans">3</text>
<text x="964.6946313073119" y="489.2254248593737" font-size="11" fill="#e0e0e0" text-anchor="middle" font-family="Liberation Sans">4</text>
<text x="950.0" y="494.0" font-size="11" fill="#e0e0e0" text-anchor="middle" font-family="Liberation Sans">5</text>
<text x="935.3053686926881" y="489.2254248593737" font-size="11" fill="#e0e0e0" text-anchor="middle" font-family="Liberation Sans">6</text>
<text x="926.2235870926212" y="476.7254248593737" font-size="11" fill="#e0e0e0" text-anchor="middle" font-family="Liberation Sans">7</text>
<text x="926.2235870926212" y="461.2745751406263" font-size="11" fill="#e0e0e0" text-anchor="middle" font-family="Liberation Sans">8</text>
<text x="935.3053686926881" y="448.7745751406263" font-size="11" fill="#e0e0e0" text-anchor="middle" font-family="Liberation Sans">9</text>
<circle cx="950" cy="464.5" r="3.2" fill="none" stroke="#e0e0e0" stroke-width="1.2"/>
<line x1="948" y1="466.5" x2="935" y2="474" stroke="#e0e0e0" stroke-width="2.5"/>
<line x1="948" y1="466.5" x2="935" y2="474" stroke="#000" stroke-width="0.8"/>
<line x1="949" y1="461.5" x2="946" y2="449" stroke="#e0e0e0" stroke-width="1.5"/>
<text x="884" y="496" font-size="11" fill="#e0e0e0" font-family="Liberation Sans">-34.235 m</text>
<text x="1013" y="496" font-size="11" fill="#e0e0e0" text-anchor="end" font-family="Liberation Sans">x100</text>
<line x1="966.50" y1="559.00" x2="968.50" y2="559.00" stroke="#a0a0a0" stroke-width="0.7"/><line x1="966.41" y1="560.78" x2="968.40" y2="560.99" stroke="#a0a0a0" stroke-width="0.7"/><line x1="966.13" y1="562.53" x2="968.08" y2="562.95" stroke="#a0a0a0" stroke-width="0.7"/><line x1="965.67" y1="564.25" x2="967.57" y2="564.87" stroke="#a0a0a0" stroke-width="0.7"/><line x1="965.03" y1="565.91" x2="966.86" y2="566.73" stroke="#a0a0a0" stroke-width="0.7"/><line x1="964.22" y1="567.50" x2="965.95" y2="568.50" stroke="#a0a0a0" stroke-width="0.7"/><line x1="963.25" y1="568.99" x2="964.87" y2="570.17" stroke="#a0a0a0" stroke-width="0.7"/><line x1="962.13" y1="570.38" x2="963.62" y2="571.71" stroke="#a0a0a0" stroke-width="0.7"/><line x1="960.88" y1="571.63" x2="962.21" y2="573.12" stroke="#a0a0a0" stroke-width="0.7"/><line x1="959.49" y1="572.75" x2="960.67" y2="574.37" stroke="#a0a0a0" stroke-width="0.7"/><line x1="958.00" y1="573.72" x2="959.00" y2="575.45" stroke="#a0a0a0" stroke-width="0.7"/><line x1="956.41" y1="574.53" x2="957.23" y2="576.36" stroke="#a0a0a0" stroke-width="0.7"/><line x1="954.75" y1="575.17" x2="955.37" y2="577.07" stroke="#a0a0a0" stroke-width="0.7"/><line x1="953.03" y1="575.63" x2="953.45" y2="577.58" stroke="#a0a0a0" stroke-width="0.7"/><line x1="951.28" y1="575.91" x2="951.49" y2="577.90" stroke="#a0a0a0" stroke-width="0.7"/><line x1="949.50" y1="576.00" x2="949.50" y2="578.00" stroke="#a0a0a0" stroke-width="0.7"/><line x1="947.72" y1="575.91" x2="947.51" y2="577.90" stroke="#a0a0a0" stroke-width="0.7"/><line x1="945.97" y1="575.63" x2="945.55" y2="577.58" stroke="#a0a0a0" stroke-width="0.7"/><line x1="944.25" y1="575.17" x2="943.63" y2="577.07" stroke="#a0a0a0" stroke-width="0.7"/><line x1="942.59" y1="574.53" x2="941.77" y2="576.36" stroke="#a0a0a0" stroke-width="0.7"/><line x1="941.00" y1="573.72" x2="940.00" y2="575.45" stroke="#a0a0a0" stroke-width="0.7"/><line x1="939.51" y1="572.75" x2="938.33" y2="574.37" stroke="#a0a0a0" stroke-width="0.7"/><line x1="938.12" y1="571.63" x2="936.79" y2="573.12" stroke="#a0a0a0" stroke-width="0.7"/><line x1="936.87" y1="570.38" x2="935.38" y2="571.71" stroke="#a0a0a0" stroke-width="0.7"/><line x1="935.75" y1="568.99" x2="934.13" y2="570.17" stroke="#a0a0a0" stroke-width="0.7"/><line x1="934.78" y1="567.50" x2="933.05" y2="568.50" stroke="#a0a0a0" stroke-width="0.7"/><line x1="933.97" y1="565.91" x2="932.14" y2="566.73" stroke="#a0a0a0" stroke-width="0.7"/><line x1="933.33" y1="564.25" x2="931.43" y2="564.87" stroke="#a0a0a0" stroke-width="0.7"/><line x1="932.87" y1="562.53" x2="930.92" y2="562.95" stroke="#a0a0a0" stroke-width="0.7"/><line x1="932.59" y1="560.78" x2="930.60" y2="560.99" stroke="#a0a0a0" stroke-width="0.7"/><line x1="932.50" y1="559.00" x2="930.50" y2="559.00" stroke="#a0a0a0" stroke-width="0.7"/><line x1="932.59" y1="557.22" x2="930.60" y2="557.01" stroke="#a0a0a0" stroke-width="0.7"/><line x1="932.87" y1="555.47" x2="930.92" y2="555.05" stroke="#a0a0a0" stroke-width="0.7"/><line x1="933.33" y1="553.75" x2="931.43" y2="553.13" stroke="#a0a0a0" stroke-width="0.7"/><line x1="933.97" y1="552.09" x2="932.14" y2="551.27" stroke="#a0a0a0" stroke-width="0.7"/><line x1="934.78" y1="550.50" x2="933.05" y2="549.50" stroke="#a0a0a0" stroke-width="0.7"/><line x1="935.75" y1="549.01" x2="934.13" y2="547.83" stroke="#a0a0a0" stroke-width="0.7"/><line x1="936.87" y1="547.62" x2="935.38" y2="546.29" stroke="#a0a0a0" stroke-width="0.7"/><line x1="938.12" y1="546.37" x2="936.79" y2="544.88" stroke="#a0a0a0" stroke-width="0.7"/><line x1="939.51" y1="545.25" x2="938.33" y2="543.63" stroke="#a0a0a0" stroke-width="0.7"/><line x1="941.00" y1="544.28" x2="940.00" y2="542.55" stroke="#a0a0a0" stroke-width="0.7"/><line x1="942.59" y1="543.47" x2="941.77" y2="541.64" stroke="#a0a0a0" stroke-width="0.7"/><line x1="944.25" y1="542.83" x2="943.63" y2="540.93" stroke="#a0a0a0" stroke-width="0.7"/><line x1="945.97" y1="542.37" x2="945.55" y2="540.42" stroke="#a0a0a0" stroke-width="0.7"/><line x1="947.72" y1="542.09" x2="947.51" y2="540.10" stroke="#a0a0a0" stroke-width="0.7"/><line x1="949.50" y1="542.00" x2="949.50" y2="540.00" stroke="#a0a0a0" stroke-width="0.7"/><line x1="951.28" y1="542.09" x2="951.49" y2="540.10" stroke="#a0a0a0" stroke-width="0.7"/><line x1="953.03" y1="542.37" x2="953.45" y2="540.42" stroke="#a0a0a0" stroke-width="0.7"/><line x1="954.75" y1="542.83" x2="955.37" y2="540.93" stroke="#a0a0a0" stroke-width="0.7"/><line x1="956.41" y1="543.47" x2="957.23" y2="541.64" stroke="#a0a0a0" stroke-width="0.7"/><line x1="958.00" y1="544.28" x2="959.00" y2="542.55" stroke="#a0a0a0" stroke-width="0.7"/><line x1="959.49" y1="545.25" x2="960.67" y2="543.63" stroke="#a0a0a0" stroke-width="0.7"/><line x1="960.88" y1="546.37" x2="962.21" y2="544.88" stroke="#a0a0a0" stroke-width="0.7"/><line x1="962.13" y1="547.62" x2="963.62" y2="546.29" stroke="#a0a0a0" stroke-width="0.7"/><line x1="963.25" y1="549.01" x2="964.87" y2="547.83" stroke="#a0a0a0" stroke-width="0.7"/><line x1="964.22" y1="550.50" x2="965.95" y2="549.50" stroke="#a0a0a0" stroke-width="0.7"/><line x1="965.03" y1="552.09" x2="966.86" y2="551.27" stroke="#a0a0a0" stroke-width="0.7"/><line x1="965.67" y1="553.75" x2="967.57" y2="553.13" stroke="#a0a0a0" stroke-width="0.7"/><line x1="966.13" y1="555.47" x2="968.08" y2="555.05" stroke="#a0a0a0" stroke-width="0.7"/><line x1="966.41" y1="557.22" x2="968.40" y2="557.01" stroke="#a0a0a0" stroke-width="0.7"/><line x1="966.50" y1="559.00" x2="968.50" y2="559.00" stroke="#a0a0a0" stroke-width="0.7"/>
<line x1="964.50" y1="559.00" x2="970.50" y2="559.00" stroke="#e0e0e0" stroke-width="1"/><line x1="962.49" y1="566.50" x2="967.69" y2="569.50" stroke="#e0e0e0" stroke-width="1"/><line x1="957.00" y1="571.99" x2="960.00" y2="577.19" stroke="#e0e0e0" stroke-width="1"/><line x1="949.50" y1="574.00" x2="949.50" y2="580.00" stroke="#e0e0e0" stroke-width="1"/><line x1="942.00" y1="571.99" x2="939.00" y2="577.19" stroke="#e0e0e0" stroke-width="1"/><line x1="936.51" y1="566.50" x2="931.31" y2="569.50" stroke="#e0e0e0" stroke-width="1"/><line x1="934.50" y1="559.00" x2="928.50" y2="559.00" stroke="#e0e0e0" stroke-width="1"/><line x1="936.51" y1="551.50" x2="931.31" y2="548.50" stroke="#e0e0e0" stroke-width="1"/><line x1="942.00" y1="546.01" x2="939.00" y2="540.81" stroke="#e0e0e0" stroke-width="1"/><line x1="949.50" y1="544.00" x2="949.50" y2="538.00" stroke="#e0e0e0" stroke-width="1"/><line x1="957.00" y1="546.01" x2="960.00" y2="540.81" stroke="#e0e0e0" stroke-width="1"/><line x1="962.49" y1="551.50" x2="967.69" y2="548.50" stroke="#e0e0e0" stroke-width="1"/><line x1="964.50" y1="559.00" x2="970.50" y2="559.00" stroke="#e0e0e0" stroke-width="1"/>
<line x1="938" y1="551" x2="955" y2="562" stroke="#e0e0e0" stroke-width="1"/>
<line x1="940" y1="558" x2="962" y2="560" stroke="#e0e0e0" stroke-width="1"/>
<text x="884" y="537" font-size="11" fill="#e0e0e0" font-family="Liberation Sans">09:15:50</text>
<text x="1015" y="537" font-size="11" fill="#e0e0e0" text-anchor="end" font-family="Liberation Sans">UTC</text>
<text x="884" y="590.5" font-size="11" fill="#e0e0e0" font-family="Liberation Sans">Friday</text>
<text x="1015" y="590.5" font-size="11" fill="#e0e0e0" text-anchor="end" font-family="Liberation Sans">01/06/2023</text>
</svg>
<svg style="left:0;top:597px" width="1022" height="23" shape-rendering="crispEdges">
<rect x="624" y="14" width="12" height="1" fill="#000"/>
<rect x="626" y="11" width="3" height="7" fill="#000"/>
<rect x="630" y="11" width="3" height="7" fill="#000"/>
<rect x="627" y="12" width="1" height="5" fill="#fff"/>
<rect x="631" y="12" width="1" height="5" fill="#fff"/>
<rect x="624" y="13" width="2" height="3" fill="#000"/>
<rect x="633" y="13" width="3" height="3" fill="#000"/>
<rect x="732" y="8" width="14" height="14" fill="#000"/>
<rect x="733" y="9" width="12" height="12" fill="#808040"/>
<rect x="735" y="9" width="8" height="6" fill="#c0c0c0"/>
<rect x="735" y="16" width="8" height="5" fill="#000"/>
<rect x="740" y="17" width="2" height="3" fill="#c0c0c0"/>
<circle cx="1012" cy="15" r="5" fill="none" stroke="#808080" stroke-width="2"/><circle cx="1012" cy="15" r="2" fill="#fff"/>
</svg>
</body></html>
